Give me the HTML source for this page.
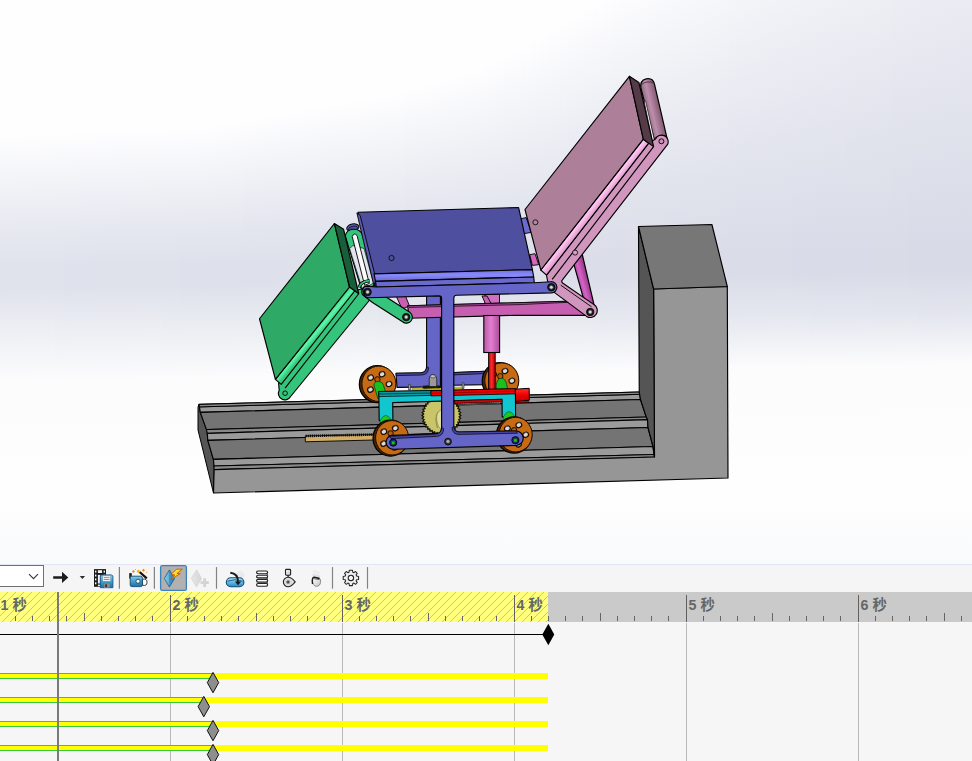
<!DOCTYPE html>
<html lang="zh-CN"><head><meta charset="utf-8"><title>运动算例</title>
<style>
html,body{margin:0;padding:0;}
body{width:972px;height:761px;overflow:hidden;background:#f6f6f6;font-family:"Liberation Sans","Noto Sans CJK SC",sans-serif;position:relative;}
#view{position:absolute;left:0;top:0;width:972px;height:564px;overflow:hidden;background:#fdfdfe;}
#view svg{position:absolute;left:0;top:0;}
#sep{position:absolute;left:0;top:564px;width:972px;height:1px;background:#e4e4f4;}
#bar{position:absolute;left:0;top:565px;width:972px;height:27px;background:#f5f5f5;}
#ruler{position:absolute;left:0;top:592px;}
#tracks{position:absolute;left:0;top:622px;width:972px;height:139px;background:#f6f6f6;}
#tb{position:absolute;left:0;top:564px;}
</style></head><body>
<div id="view">
<svg width="972" height="564" viewBox="0 0 972 564">
<g id="bg"><defs><linearGradient id="bg0" gradientUnits="userSpaceOnUse" x1="0" y1="-400" x2="0" y2="600"><stop offset="0.0000" stop-color="rgb(255,255,255)"/><stop offset="0.5348" stop-color="rgb(254,254,255)"/><stop offset="0.6346" stop-color="rgb(230,232,240)"/><stop offset="0.6679" stop-color="rgb(224,227,236)"/><stop offset="0.6899" stop-color="rgb(224,227,236)"/><stop offset="0.7269" stop-color="rgb(236,238,243)"/><stop offset="0.7819" stop-color="rgb(252,252,253)"/><stop offset="0.9000" stop-color="rgb(254,254,254)"/><stop offset="0.9630" stop-color="rgb(249,250,252)"/><stop offset="1.0000" stop-color="rgb(249,250,252)"/></linearGradient><linearGradient id="bg1" gradientUnits="userSpaceOnUse" x1="0" y1="-400" x2="0" y2="600"><stop offset="0.0000" stop-color="rgb(255,255,255)"/><stop offset="0.5345" stop-color="rgb(254,254,255)"/><stop offset="0.6344" stop-color="rgb(230,232,240)"/><stop offset="0.6677" stop-color="rgb(224,227,236)"/><stop offset="0.6897" stop-color="rgb(224,227,236)"/><stop offset="0.7268" stop-color="rgb(236,238,243)"/><stop offset="0.7817" stop-color="rgb(252,252,253)"/><stop offset="0.9000" stop-color="rgb(254,254,254)"/><stop offset="0.9630" stop-color="rgb(249,250,252)"/><stop offset="1.0000" stop-color="rgb(249,250,252)"/></linearGradient><linearGradient id="bg2" gradientUnits="userSpaceOnUse" x1="0" y1="-400" x2="0" y2="600"><stop offset="0.0000" stop-color="rgb(255,255,255)"/><stop offset="0.5342" stop-color="rgb(254,254,255)"/><stop offset="0.6342" stop-color="rgb(230,232,240)"/><stop offset="0.6676" stop-color="rgb(224,227,236)"/><stop offset="0.6895" stop-color="rgb(224,227,236)"/><stop offset="0.7267" stop-color="rgb(236,238,243)"/><stop offset="0.7816" stop-color="rgb(252,252,253)"/><stop offset="0.9000" stop-color="rgb(254,254,254)"/><stop offset="0.9630" stop-color="rgb(249,250,252)"/><stop offset="1.0000" stop-color="rgb(249,250,252)"/></linearGradient><linearGradient id="bg3" gradientUnits="userSpaceOnUse" x1="0" y1="-400" x2="0" y2="600"><stop offset="0.0000" stop-color="rgb(255,255,255)"/><stop offset="0.5339" stop-color="rgb(254,254,255)"/><stop offset="0.6340" stop-color="rgb(230,232,240)"/><stop offset="0.6674" stop-color="rgb(224,227,236)"/><stop offset="0.6894" stop-color="rgb(224,227,236)"/><stop offset="0.7265" stop-color="rgb(236,238,243)"/><stop offset="0.7814" stop-color="rgb(252,252,253)"/><stop offset="0.9000" stop-color="rgb(254,254,254)"/><stop offset="0.9630" stop-color="rgb(249,250,252)"/><stop offset="1.0000" stop-color="rgb(249,250,252)"/></linearGradient><linearGradient id="bg4" gradientUnits="userSpaceOnUse" x1="0" y1="-400" x2="0" y2="600"><stop offset="0.0000" stop-color="rgb(255,255,255)"/><stop offset="0.5336" stop-color="rgb(254,254,255)"/><stop offset="0.6338" stop-color="rgb(230,232,240)"/><stop offset="0.6673" stop-color="rgb(224,227,236)"/><stop offset="0.6892" stop-color="rgb(224,227,236)"/><stop offset="0.7264" stop-color="rgb(236,238,243)"/><stop offset="0.7812" stop-color="rgb(252,252,253)"/><stop offset="0.9000" stop-color="rgb(254,254,254)"/><stop offset="0.9630" stop-color="rgb(249,250,252)"/><stop offset="1.0000" stop-color="rgb(249,250,252)"/></linearGradient><linearGradient id="bg5" gradientUnits="userSpaceOnUse" x1="0" y1="-400" x2="0" y2="600"><stop offset="0.0000" stop-color="rgb(255,255,255)"/><stop offset="0.5333" stop-color="rgb(254,254,255)"/><stop offset="0.6336" stop-color="rgb(230,232,240)"/><stop offset="0.6671" stop-color="rgb(224,227,236)"/><stop offset="0.6890" stop-color="rgb(224,227,236)"/><stop offset="0.7262" stop-color="rgb(236,238,243)"/><stop offset="0.7811" stop-color="rgb(252,252,253)"/><stop offset="0.9000" stop-color="rgb(254,254,254)"/><stop offset="0.9630" stop-color="rgb(249,250,252)"/><stop offset="1.0000" stop-color="rgb(249,250,252)"/></linearGradient><linearGradient id="bg6" gradientUnits="userSpaceOnUse" x1="0" y1="-400" x2="0" y2="600"><stop offset="0.0000" stop-color="rgb(255,255,255)"/><stop offset="0.5330" stop-color="rgb(254,254,255)"/><stop offset="0.6334" stop-color="rgb(230,232,240)"/><stop offset="0.6669" stop-color="rgb(224,227,236)"/><stop offset="0.6888" stop-color="rgb(224,227,236)"/><stop offset="0.7261" stop-color="rgb(235,237,243)"/><stop offset="0.7809" stop-color="rgb(252,252,253)"/><stop offset="0.9000" stop-color="rgb(254,254,254)"/><stop offset="0.9630" stop-color="rgb(249,250,252)"/><stop offset="1.0000" stop-color="rgb(249,250,252)"/></linearGradient><linearGradient id="bg7" gradientUnits="userSpaceOnUse" x1="0" y1="-400" x2="0" y2="600"><stop offset="0.0000" stop-color="rgb(255,255,255)"/><stop offset="0.5326" stop-color="rgb(254,254,255)"/><stop offset="0.6332" stop-color="rgb(230,232,240)"/><stop offset="0.6667" stop-color="rgb(223,226,236)"/><stop offset="0.6886" stop-color="rgb(223,226,236)"/><stop offset="0.7260" stop-color="rgb(235,237,243)"/><stop offset="0.7808" stop-color="rgb(252,252,253)"/><stop offset="0.9000" stop-color="rgb(254,254,254)"/><stop offset="0.9630" stop-color="rgb(249,250,252)"/><stop offset="1.0000" stop-color="rgb(249,250,252)"/></linearGradient><linearGradient id="bg8" gradientUnits="userSpaceOnUse" x1="0" y1="-400" x2="0" y2="600"><stop offset="0.0000" stop-color="rgb(255,255,255)"/><stop offset="0.5323" stop-color="rgb(254,254,255)"/><stop offset="0.6330" stop-color="rgb(230,232,240)"/><stop offset="0.6666" stop-color="rgb(223,226,236)"/><stop offset="0.6884" stop-color="rgb(223,226,236)"/><stop offset="0.7258" stop-color="rgb(235,237,243)"/><stop offset="0.7806" stop-color="rgb(252,252,253)"/><stop offset="0.9000" stop-color="rgb(254,254,254)"/><stop offset="0.9630" stop-color="rgb(249,250,252)"/><stop offset="1.0000" stop-color="rgb(249,250,252)"/></linearGradient><linearGradient id="bg9" gradientUnits="userSpaceOnUse" x1="0" y1="-400" x2="0" y2="600"><stop offset="0.0000" stop-color="rgb(255,255,255)"/><stop offset="0.5320" stop-color="rgb(254,254,255)"/><stop offset="0.6328" stop-color="rgb(229,231,240)"/><stop offset="0.6664" stop-color="rgb(223,226,236)"/><stop offset="0.6882" stop-color="rgb(223,226,236)"/><stop offset="0.7257" stop-color="rgb(235,237,243)"/><stop offset="0.7804" stop-color="rgb(252,252,253)"/><stop offset="0.9000" stop-color="rgb(254,254,254)"/><stop offset="0.9630" stop-color="rgb(249,250,252)"/><stop offset="1.0000" stop-color="rgb(249,250,252)"/></linearGradient><linearGradient id="bg10" gradientUnits="userSpaceOnUse" x1="0" y1="-400" x2="0" y2="600"><stop offset="0.0000" stop-color="rgb(255,255,255)"/><stop offset="0.5317" stop-color="rgb(254,254,255)"/><stop offset="0.6326" stop-color="rgb(229,231,240)"/><stop offset="0.6663" stop-color="rgb(223,226,236)"/><stop offset="0.6881" stop-color="rgb(223,226,236)"/><stop offset="0.7255" stop-color="rgb(235,237,243)"/><stop offset="0.7802" stop-color="rgb(252,252,253)"/><stop offset="0.9000" stop-color="rgb(254,254,254)"/><stop offset="0.9630" stop-color="rgb(249,250,252)"/><stop offset="1.0000" stop-color="rgb(249,250,252)"/></linearGradient><linearGradient id="bg11" gradientUnits="userSpaceOnUse" x1="0" y1="-400" x2="0" y2="600"><stop offset="0.0000" stop-color="rgb(255,255,255)"/><stop offset="0.5314" stop-color="rgb(254,254,255)"/><stop offset="0.6324" stop-color="rgb(229,231,240)"/><stop offset="0.6661" stop-color="rgb(223,226,235)"/><stop offset="0.6879" stop-color="rgb(223,226,235)"/><stop offset="0.7254" stop-color="rgb(235,237,242)"/><stop offset="0.7801" stop-color="rgb(252,252,253)"/><stop offset="0.9000" stop-color="rgb(254,254,254)"/><stop offset="0.9630" stop-color="rgb(249,250,252)"/><stop offset="1.0000" stop-color="rgb(249,250,252)"/></linearGradient><linearGradient id="bg12" gradientUnits="userSpaceOnUse" x1="0" y1="-400" x2="0" y2="600"><stop offset="0.0000" stop-color="rgb(255,255,255)"/><stop offset="0.5311" stop-color="rgb(254,254,255)"/><stop offset="0.6322" stop-color="rgb(229,231,240)"/><stop offset="0.6659" stop-color="rgb(223,226,235)"/><stop offset="0.6877" stop-color="rgb(223,226,235)"/><stop offset="0.7253" stop-color="rgb(235,237,242)"/><stop offset="0.7799" stop-color="rgb(252,252,253)"/><stop offset="0.9000" stop-color="rgb(254,254,254)"/><stop offset="0.9630" stop-color="rgb(249,250,252)"/><stop offset="1.0000" stop-color="rgb(249,250,252)"/></linearGradient><linearGradient id="bg13" gradientUnits="userSpaceOnUse" x1="0" y1="-400" x2="0" y2="600"><stop offset="0.0000" stop-color="rgb(255,255,255)"/><stop offset="0.5307" stop-color="rgb(254,254,255)"/><stop offset="0.6320" stop-color="rgb(229,231,240)"/><stop offset="0.6657" stop-color="rgb(223,226,235)"/><stop offset="0.6875" stop-color="rgb(223,226,235)"/><stop offset="0.7251" stop-color="rgb(235,237,242)"/><stop offset="0.7798" stop-color="rgb(252,252,253)"/><stop offset="0.9000" stop-color="rgb(254,254,254)"/><stop offset="0.9630" stop-color="rgb(249,250,252)"/><stop offset="1.0000" stop-color="rgb(249,250,252)"/></linearGradient><linearGradient id="bg14" gradientUnits="userSpaceOnUse" x1="0" y1="-400" x2="0" y2="600"><stop offset="0.0000" stop-color="rgb(255,255,255)"/><stop offset="0.5304" stop-color="rgb(254,254,255)"/><stop offset="0.6318" stop-color="rgb(229,231,239)"/><stop offset="0.6656" stop-color="rgb(223,226,235)"/><stop offset="0.6873" stop-color="rgb(223,226,235)"/><stop offset="0.7250" stop-color="rgb(235,237,242)"/><stop offset="0.7796" stop-color="rgb(252,252,253)"/><stop offset="0.9000" stop-color="rgb(254,254,254)"/><stop offset="0.9630" stop-color="rgb(249,250,252)"/><stop offset="1.0000" stop-color="rgb(249,250,252)"/></linearGradient><linearGradient id="bg15" gradientUnits="userSpaceOnUse" x1="0" y1="-400" x2="0" y2="600"><stop offset="0.0000" stop-color="rgb(255,255,255)"/><stop offset="0.5301" stop-color="rgb(254,254,255)"/><stop offset="0.6316" stop-color="rgb(229,231,239)"/><stop offset="0.6654" stop-color="rgb(223,226,235)"/><stop offset="0.6871" stop-color="rgb(223,226,235)"/><stop offset="0.7248" stop-color="rgb(235,237,242)"/><stop offset="0.7794" stop-color="rgb(252,252,253)"/><stop offset="0.9000" stop-color="rgb(254,254,254)"/><stop offset="0.9630" stop-color="rgb(249,250,252)"/><stop offset="1.0000" stop-color="rgb(249,250,252)"/></linearGradient><linearGradient id="bg16" gradientUnits="userSpaceOnUse" x1="0" y1="-400" x2="0" y2="600"><stop offset="0.0000" stop-color="rgb(255,255,255)"/><stop offset="0.5298" stop-color="rgb(254,254,255)"/><stop offset="0.6314" stop-color="rgb(229,231,239)"/><stop offset="0.6653" stop-color="rgb(223,226,235)"/><stop offset="0.6869" stop-color="rgb(223,226,235)"/><stop offset="0.7247" stop-color="rgb(235,237,242)"/><stop offset="0.7792" stop-color="rgb(252,252,253)"/><stop offset="0.9000" stop-color="rgb(254,254,254)"/><stop offset="0.9630" stop-color="rgb(249,250,252)"/><stop offset="1.0000" stop-color="rgb(249,250,252)"/></linearGradient><linearGradient id="bg17" gradientUnits="userSpaceOnUse" x1="0" y1="-400" x2="0" y2="600"><stop offset="0.0000" stop-color="rgb(255,255,255)"/><stop offset="0.5295" stop-color="rgb(254,254,255)"/><stop offset="0.6312" stop-color="rgb(229,231,239)"/><stop offset="0.6651" stop-color="rgb(223,226,235)"/><stop offset="0.6868" stop-color="rgb(223,226,235)"/><stop offset="0.7246" stop-color="rgb(235,237,242)"/><stop offset="0.7791" stop-color="rgb(252,252,253)"/><stop offset="0.9000" stop-color="rgb(254,254,254)"/><stop offset="0.9630" stop-color="rgb(249,250,252)"/><stop offset="1.0000" stop-color="rgb(249,250,252)"/></linearGradient><linearGradient id="bg18" gradientUnits="userSpaceOnUse" x1="0" y1="-400" x2="0" y2="600"><stop offset="0.0000" stop-color="rgb(255,255,255)"/><stop offset="0.5292" stop-color="rgb(254,254,255)"/><stop offset="0.6310" stop-color="rgb(229,231,239)"/><stop offset="0.6649" stop-color="rgb(223,226,235)"/><stop offset="0.6866" stop-color="rgb(223,226,235)"/><stop offset="0.7244" stop-color="rgb(234,236,242)"/><stop offset="0.7789" stop-color="rgb(252,252,253)"/><stop offset="0.9000" stop-color="rgb(254,254,254)"/><stop offset="0.9630" stop-color="rgb(249,250,252)"/><stop offset="1.0000" stop-color="rgb(249,250,252)"/></linearGradient><linearGradient id="bg19" gradientUnits="userSpaceOnUse" x1="0" y1="-400" x2="0" y2="600"><stop offset="0.0000" stop-color="rgb(255,255,255)"/><stop offset="0.5289" stop-color="rgb(254,254,255)"/><stop offset="0.6308" stop-color="rgb(229,231,239)"/><stop offset="0.6647" stop-color="rgb(223,226,235)"/><stop offset="0.6864" stop-color="rgb(223,226,235)"/><stop offset="0.7243" stop-color="rgb(234,236,242)"/><stop offset="0.7788" stop-color="rgb(252,252,253)"/><stop offset="0.9000" stop-color="rgb(254,254,254)"/><stop offset="0.9630" stop-color="rgb(249,250,252)"/><stop offset="1.0000" stop-color="rgb(249,250,252)"/></linearGradient><linearGradient id="bg20" gradientUnits="userSpaceOnUse" x1="0" y1="-400" x2="0" y2="600"><stop offset="0.0000" stop-color="rgb(255,255,255)"/><stop offset="0.5285" stop-color="rgb(254,254,255)"/><stop offset="0.6306" stop-color="rgb(229,231,239)"/><stop offset="0.6646" stop-color="rgb(222,225,235)"/><stop offset="0.6862" stop-color="rgb(222,225,235)"/><stop offset="0.7242" stop-color="rgb(234,236,242)"/><stop offset="0.7786" stop-color="rgb(252,252,253)"/><stop offset="0.9000" stop-color="rgb(254,254,254)"/><stop offset="0.9630" stop-color="rgb(249,250,252)"/><stop offset="1.0000" stop-color="rgb(249,250,252)"/></linearGradient><linearGradient id="bg21" gradientUnits="userSpaceOnUse" x1="0" y1="-400" x2="0" y2="600"><stop offset="0.0000" stop-color="rgb(255,255,255)"/><stop offset="0.5282" stop-color="rgb(254,254,255)"/><stop offset="0.6304" stop-color="rgb(229,231,239)"/><stop offset="0.6644" stop-color="rgb(222,225,235)"/><stop offset="0.6860" stop-color="rgb(222,225,235)"/><stop offset="0.7240" stop-color="rgb(234,236,242)"/><stop offset="0.7784" stop-color="rgb(252,252,253)"/><stop offset="0.9000" stop-color="rgb(254,254,254)"/><stop offset="0.9630" stop-color="rgb(249,250,252)"/><stop offset="1.0000" stop-color="rgb(249,250,252)"/></linearGradient><linearGradient id="bg22" gradientUnits="userSpaceOnUse" x1="0" y1="-400" x2="0" y2="600"><stop offset="0.0000" stop-color="rgb(255,255,255)"/><stop offset="0.5275" stop-color="rgb(254,254,255)"/><stop offset="0.6301" stop-color="rgb(229,231,239)"/><stop offset="0.6643" stop-color="rgb(222,225,235)"/><stop offset="0.6858" stop-color="rgb(222,225,235)"/><stop offset="0.7239" stop-color="rgb(234,236,242)"/><stop offset="0.7782" stop-color="rgb(252,252,253)"/><stop offset="0.9000" stop-color="rgb(254,254,254)"/><stop offset="0.9630" stop-color="rgb(249,250,252)"/><stop offset="1.0000" stop-color="rgb(249,250,252)"/></linearGradient><linearGradient id="bg23" gradientUnits="userSpaceOnUse" x1="0" y1="-400" x2="0" y2="600"><stop offset="0.0000" stop-color="rgb(255,255,255)"/><stop offset="0.5259" stop-color="rgb(254,254,255)"/><stop offset="0.6295" stop-color="rgb(229,231,239)"/><stop offset="0.6641" stop-color="rgb(222,225,235)"/><stop offset="0.6856" stop-color="rgb(222,225,235)"/><stop offset="0.7237" stop-color="rgb(234,236,242)"/><stop offset="0.7781" stop-color="rgb(252,252,253)"/><stop offset="0.9000" stop-color="rgb(254,254,254)"/><stop offset="0.9630" stop-color="rgb(249,250,252)"/><stop offset="1.0000" stop-color="rgb(249,250,252)"/></linearGradient><linearGradient id="bg24" gradientUnits="userSpaceOnUse" x1="0" y1="-400" x2="0" y2="600"><stop offset="0.0000" stop-color="rgb(255,255,255)"/><stop offset="0.5243" stop-color="rgb(254,254,255)"/><stop offset="0.6290" stop-color="rgb(229,231,239)"/><stop offset="0.6639" stop-color="rgb(222,225,235)"/><stop offset="0.6855" stop-color="rgb(222,225,235)"/><stop offset="0.7236" stop-color="rgb(234,236,242)"/><stop offset="0.7779" stop-color="rgb(252,252,253)"/><stop offset="0.9000" stop-color="rgb(254,254,254)"/><stop offset="0.9630" stop-color="rgb(249,250,252)"/><stop offset="1.0000" stop-color="rgb(249,250,252)"/></linearGradient><linearGradient id="bg25" gradientUnits="userSpaceOnUse" x1="0" y1="-400" x2="0" y2="600"><stop offset="0.0000" stop-color="rgb(255,255,255)"/><stop offset="0.5227" stop-color="rgb(254,254,255)"/><stop offset="0.6285" stop-color="rgb(229,231,239)"/><stop offset="0.6637" stop-color="rgb(222,225,235)"/><stop offset="0.6853" stop-color="rgb(222,225,235)"/><stop offset="0.7235" stop-color="rgb(234,236,242)"/><stop offset="0.7778" stop-color="rgb(252,252,253)"/><stop offset="0.9000" stop-color="rgb(254,254,254)"/><stop offset="0.9630" stop-color="rgb(249,250,252)"/><stop offset="1.0000" stop-color="rgb(249,250,252)"/></linearGradient><linearGradient id="bg26" gradientUnits="userSpaceOnUse" x1="0" y1="-400" x2="0" y2="600"><stop offset="0.0000" stop-color="rgb(255,255,255)"/><stop offset="0.5211" stop-color="rgb(254,254,255)"/><stop offset="0.6280" stop-color="rgb(229,231,239)"/><stop offset="0.6636" stop-color="rgb(222,225,235)"/><stop offset="0.6851" stop-color="rgb(222,225,235)"/><stop offset="0.7233" stop-color="rgb(234,236,242)"/><stop offset="0.7776" stop-color="rgb(252,252,253)"/><stop offset="0.9000" stop-color="rgb(254,254,254)"/><stop offset="0.9630" stop-color="rgb(249,250,252)"/><stop offset="1.0000" stop-color="rgb(249,250,252)"/></linearGradient><linearGradient id="bg27" gradientUnits="userSpaceOnUse" x1="0" y1="-400" x2="0" y2="600"><stop offset="0.0000" stop-color="rgb(255,255,255)"/><stop offset="0.5195" stop-color="rgb(254,254,255)"/><stop offset="0.6274" stop-color="rgb(228,230,239)"/><stop offset="0.6634" stop-color="rgb(222,225,235)"/><stop offset="0.6849" stop-color="rgb(222,225,235)"/><stop offset="0.7232" stop-color="rgb(234,236,242)"/><stop offset="0.7774" stop-color="rgb(252,252,253)"/><stop offset="0.9000" stop-color="rgb(254,254,254)"/><stop offset="0.9630" stop-color="rgb(249,250,252)"/><stop offset="1.0000" stop-color="rgb(249,250,252)"/></linearGradient><linearGradient id="bg28" gradientUnits="userSpaceOnUse" x1="0" y1="-400" x2="0" y2="600"><stop offset="0.0000" stop-color="rgb(255,255,255)"/><stop offset="0.5178" stop-color="rgb(254,254,255)"/><stop offset="0.6269" stop-color="rgb(228,230,239)"/><stop offset="0.6633" stop-color="rgb(222,225,235)"/><stop offset="0.6847" stop-color="rgb(222,225,235)"/><stop offset="0.7230" stop-color="rgb(234,236,242)"/><stop offset="0.7772" stop-color="rgb(252,252,253)"/><stop offset="0.9000" stop-color="rgb(254,254,254)"/><stop offset="0.9630" stop-color="rgb(249,250,252)"/><stop offset="1.0000" stop-color="rgb(249,250,252)"/></linearGradient><linearGradient id="bg29" gradientUnits="userSpaceOnUse" x1="0" y1="-400" x2="0" y2="600"><stop offset="0.0000" stop-color="rgb(255,255,255)"/><stop offset="0.5162" stop-color="rgb(254,254,255)"/><stop offset="0.6264" stop-color="rgb(228,230,239)"/><stop offset="0.6631" stop-color="rgb(222,225,235)"/><stop offset="0.6845" stop-color="rgb(222,225,235)"/><stop offset="0.7229" stop-color="rgb(234,236,242)"/><stop offset="0.7771" stop-color="rgb(252,252,253)"/><stop offset="0.9000" stop-color="rgb(254,254,254)"/><stop offset="0.9630" stop-color="rgb(249,250,252)"/><stop offset="1.0000" stop-color="rgb(249,250,252)"/></linearGradient><linearGradient id="bg30" gradientUnits="userSpaceOnUse" x1="0" y1="-400" x2="0" y2="600"><stop offset="0.0000" stop-color="rgb(255,255,255)"/><stop offset="0.5146" stop-color="rgb(254,254,255)"/><stop offset="0.6258" stop-color="rgb(228,230,239)"/><stop offset="0.6629" stop-color="rgb(222,225,235)"/><stop offset="0.6844" stop-color="rgb(222,225,235)"/><stop offset="0.7228" stop-color="rgb(233,235,242)"/><stop offset="0.7769" stop-color="rgb(252,252,253)"/><stop offset="0.9000" stop-color="rgb(254,254,254)"/><stop offset="0.9630" stop-color="rgb(249,250,252)"/><stop offset="1.0000" stop-color="rgb(249,250,252)"/></linearGradient><linearGradient id="bg31" gradientUnits="userSpaceOnUse" x1="0" y1="-400" x2="0" y2="600"><stop offset="0.0000" stop-color="rgb(255,255,255)"/><stop offset="0.5130" stop-color="rgb(254,254,255)"/><stop offset="0.6253" stop-color="rgb(228,230,239)"/><stop offset="0.6627" stop-color="rgb(222,225,235)"/><stop offset="0.6842" stop-color="rgb(222,225,235)"/><stop offset="0.7226" stop-color="rgb(233,235,242)"/><stop offset="0.7768" stop-color="rgb(252,252,253)"/><stop offset="0.9000" stop-color="rgb(254,254,254)"/><stop offset="0.9630" stop-color="rgb(249,250,252)"/><stop offset="1.0000" stop-color="rgb(249,250,252)"/></linearGradient><linearGradient id="bg32" gradientUnits="userSpaceOnUse" x1="0" y1="-400" x2="0" y2="600"><stop offset="0.0000" stop-color="rgb(255,255,255)"/><stop offset="0.5113" stop-color="rgb(254,254,255)"/><stop offset="0.6248" stop-color="rgb(228,230,239)"/><stop offset="0.6626" stop-color="rgb(222,225,234)"/><stop offset="0.6840" stop-color="rgb(222,225,234)"/><stop offset="0.7225" stop-color="rgb(233,235,241)"/><stop offset="0.7766" stop-color="rgb(252,252,253)"/><stop offset="0.9000" stop-color="rgb(254,254,254)"/><stop offset="0.9630" stop-color="rgb(249,250,252)"/><stop offset="1.0000" stop-color="rgb(249,250,252)"/></linearGradient><linearGradient id="bg33" gradientUnits="userSpaceOnUse" x1="0" y1="-400" x2="0" y2="600"><stop offset="0.0000" stop-color="rgb(255,255,255)"/><stop offset="0.5097" stop-color="rgb(254,254,255)"/><stop offset="0.6242" stop-color="rgb(228,230,239)"/><stop offset="0.6624" stop-color="rgb(222,225,234)"/><stop offset="0.6838" stop-color="rgb(222,225,234)"/><stop offset="0.7223" stop-color="rgb(233,235,241)"/><stop offset="0.7764" stop-color="rgb(252,252,253)"/><stop offset="0.9000" stop-color="rgb(254,254,254)"/><stop offset="0.9630" stop-color="rgb(249,250,252)"/><stop offset="1.0000" stop-color="rgb(249,250,252)"/></linearGradient><linearGradient id="bg34" gradientUnits="userSpaceOnUse" x1="0" y1="-400" x2="0" y2="600"><stop offset="0.0000" stop-color="rgb(255,255,255)"/><stop offset="0.5081" stop-color="rgb(254,254,255)"/><stop offset="0.6237" stop-color="rgb(228,230,239)"/><stop offset="0.6623" stop-color="rgb(221,224,234)"/><stop offset="0.6836" stop-color="rgb(221,224,234)"/><stop offset="0.7222" stop-color="rgb(233,235,241)"/><stop offset="0.7762" stop-color="rgb(252,252,253)"/><stop offset="0.9000" stop-color="rgb(254,254,254)"/><stop offset="0.9630" stop-color="rgb(249,250,252)"/><stop offset="1.0000" stop-color="rgb(249,250,252)"/></linearGradient><linearGradient id="bg35" gradientUnits="userSpaceOnUse" x1="0" y1="-400" x2="0" y2="600"><stop offset="0.0000" stop-color="rgb(255,255,255)"/><stop offset="0.5065" stop-color="rgb(254,254,255)"/><stop offset="0.6232" stop-color="rgb(228,230,239)"/><stop offset="0.6621" stop-color="rgb(221,224,234)"/><stop offset="0.6834" stop-color="rgb(221,224,234)"/><stop offset="0.7221" stop-color="rgb(233,235,241)"/><stop offset="0.7761" stop-color="rgb(252,252,253)"/><stop offset="0.9000" stop-color="rgb(254,254,254)"/><stop offset="0.9630" stop-color="rgb(249,250,252)"/><stop offset="1.0000" stop-color="rgb(249,250,252)"/></linearGradient><linearGradient id="bg36" gradientUnits="userSpaceOnUse" x1="0" y1="-400" x2="0" y2="600"><stop offset="0.0000" stop-color="rgb(255,255,255)"/><stop offset="0.5049" stop-color="rgb(254,254,255)"/><stop offset="0.6227" stop-color="rgb(228,230,239)"/><stop offset="0.6619" stop-color="rgb(221,224,234)"/><stop offset="0.6832" stop-color="rgb(221,224,234)"/><stop offset="0.7219" stop-color="rgb(233,235,241)"/><stop offset="0.7759" stop-color="rgb(252,252,253)"/><stop offset="0.9000" stop-color="rgb(254,254,254)"/><stop offset="0.9630" stop-color="rgb(249,250,252)"/><stop offset="1.0000" stop-color="rgb(249,250,252)"/></linearGradient><linearGradient id="bg37" gradientUnits="userSpaceOnUse" x1="0" y1="-400" x2="0" y2="600"><stop offset="0.0000" stop-color="rgb(255,255,255)"/><stop offset="0.5032" stop-color="rgb(254,254,255)"/><stop offset="0.6221" stop-color="rgb(228,230,239)"/><stop offset="0.6617" stop-color="rgb(221,224,234)"/><stop offset="0.6831" stop-color="rgb(221,224,234)"/><stop offset="0.7218" stop-color="rgb(233,235,241)"/><stop offset="0.7758" stop-color="rgb(252,252,253)"/><stop offset="0.9000" stop-color="rgb(254,254,254)"/><stop offset="0.9630" stop-color="rgb(249,250,252)"/><stop offset="1.0000" stop-color="rgb(249,250,252)"/></linearGradient><linearGradient id="bg38" gradientUnits="userSpaceOnUse" x1="0" y1="-400" x2="0" y2="600"><stop offset="0.0000" stop-color="rgb(255,255,255)"/><stop offset="0.5016" stop-color="rgb(254,254,255)"/><stop offset="0.6216" stop-color="rgb(228,230,239)"/><stop offset="0.6616" stop-color="rgb(221,224,234)"/><stop offset="0.6829" stop-color="rgb(221,224,234)"/><stop offset="0.7217" stop-color="rgb(233,235,241)"/><stop offset="0.7756" stop-color="rgb(252,252,253)"/><stop offset="0.9000" stop-color="rgb(254,254,254)"/><stop offset="0.9630" stop-color="rgb(249,250,252)"/><stop offset="1.0000" stop-color="rgb(249,250,252)"/></linearGradient><linearGradient id="bg39" gradientUnits="userSpaceOnUse" x1="0" y1="-400" x2="0" y2="600"><stop offset="0.0000" stop-color="rgb(255,255,255)"/><stop offset="0.5000" stop-color="rgb(254,254,255)"/><stop offset="0.6211" stop-color="rgb(228,230,239)"/><stop offset="0.6614" stop-color="rgb(221,224,234)"/><stop offset="0.6827" stop-color="rgb(221,224,234)"/><stop offset="0.7215" stop-color="rgb(233,235,241)"/><stop offset="0.7754" stop-color="rgb(252,252,253)"/><stop offset="0.9000" stop-color="rgb(254,254,254)"/><stop offset="0.9630" stop-color="rgb(249,250,252)"/><stop offset="1.0000" stop-color="rgb(249,250,252)"/></linearGradient><linearGradient id="bg40" gradientUnits="userSpaceOnUse" x1="0" y1="-400" x2="0" y2="600"><stop offset="0.0000" stop-color="rgb(255,255,255)"/><stop offset="0.4984" stop-color="rgb(254,254,255)"/><stop offset="0.6205" stop-color="rgb(228,230,238)"/><stop offset="0.6613" stop-color="rgb(221,224,234)"/><stop offset="0.6825" stop-color="rgb(221,224,234)"/><stop offset="0.7214" stop-color="rgb(233,235,241)"/><stop offset="0.7752" stop-color="rgb(252,252,253)"/><stop offset="0.9000" stop-color="rgb(254,254,254)"/><stop offset="0.9630" stop-color="rgb(249,250,252)"/><stop offset="1.0000" stop-color="rgb(249,250,252)"/></linearGradient><linearGradient id="bg41" gradientUnits="userSpaceOnUse" x1="0" y1="-400" x2="0" y2="600"><stop offset="0.0000" stop-color="rgb(255,255,255)"/><stop offset="0.4968" stop-color="rgb(254,254,255)"/><stop offset="0.6200" stop-color="rgb(228,230,238)"/><stop offset="0.6611" stop-color="rgb(221,224,234)"/><stop offset="0.6823" stop-color="rgb(221,224,234)"/><stop offset="0.7212" stop-color="rgb(233,235,241)"/><stop offset="0.7751" stop-color="rgb(252,252,253)"/><stop offset="0.9000" stop-color="rgb(254,254,254)"/><stop offset="0.9630" stop-color="rgb(249,250,252)"/><stop offset="1.0000" stop-color="rgb(249,250,252)"/></linearGradient><linearGradient id="bg42" gradientUnits="userSpaceOnUse" x1="0" y1="-400" x2="0" y2="600"><stop offset="0.0000" stop-color="rgb(255,255,255)"/><stop offset="0.4951" stop-color="rgb(254,254,255)"/><stop offset="0.6195" stop-color="rgb(228,230,238)"/><stop offset="0.6609" stop-color="rgb(221,224,234)"/><stop offset="0.6821" stop-color="rgb(221,224,234)"/><stop offset="0.7211" stop-color="rgb(232,234,241)"/><stop offset="0.7749" stop-color="rgb(252,252,253)"/><stop offset="0.9000" stop-color="rgb(254,254,254)"/><stop offset="0.9630" stop-color="rgb(249,250,252)"/><stop offset="1.0000" stop-color="rgb(249,250,252)"/></linearGradient><linearGradient id="bg43" gradientUnits="userSpaceOnUse" x1="0" y1="-400" x2="0" y2="600"><stop offset="0.0000" stop-color="rgb(255,255,255)"/><stop offset="0.4935" stop-color="rgb(254,254,255)"/><stop offset="0.6189" stop-color="rgb(228,230,238)"/><stop offset="0.6607" stop-color="rgb(221,224,234)"/><stop offset="0.6819" stop-color="rgb(221,224,234)"/><stop offset="0.7210" stop-color="rgb(232,234,241)"/><stop offset="0.7748" stop-color="rgb(252,252,253)"/><stop offset="0.9000" stop-color="rgb(254,254,254)"/><stop offset="0.9630" stop-color="rgb(249,250,252)"/><stop offset="1.0000" stop-color="rgb(249,250,252)"/></linearGradient><linearGradient id="bg44" gradientUnits="userSpaceOnUse" x1="0" y1="-400" x2="0" y2="600"><stop offset="0.0000" stop-color="rgb(255,255,255)"/><stop offset="0.4919" stop-color="rgb(254,254,255)"/><stop offset="0.6184" stop-color="rgb(228,230,238)"/><stop offset="0.6606" stop-color="rgb(221,224,234)"/><stop offset="0.6818" stop-color="rgb(221,224,234)"/><stop offset="0.7208" stop-color="rgb(232,234,241)"/><stop offset="0.7746" stop-color="rgb(252,252,253)"/><stop offset="0.9000" stop-color="rgb(254,254,254)"/><stop offset="0.9630" stop-color="rgb(249,250,252)"/><stop offset="1.0000" stop-color="rgb(249,250,252)"/></linearGradient><linearGradient id="bg45" gradientUnits="userSpaceOnUse" x1="0" y1="-400" x2="0" y2="600"><stop offset="0.0000" stop-color="rgb(255,255,255)"/><stop offset="0.4891" stop-color="rgb(254,254,255)"/><stop offset="0.6176" stop-color="rgb(227,229,238)"/><stop offset="0.6604" stop-color="rgb(221,224,234)"/><stop offset="0.6816" stop-color="rgb(221,224,234)"/><stop offset="0.7207" stop-color="rgb(232,234,241)"/><stop offset="0.7744" stop-color="rgb(252,252,253)"/><stop offset="0.9000" stop-color="rgb(254,254,254)"/><stop offset="0.9630" stop-color="rgb(249,250,252)"/><stop offset="1.0000" stop-color="rgb(249,250,252)"/></linearGradient><linearGradient id="bg46" gradientUnits="userSpaceOnUse" x1="0" y1="-400" x2="0" y2="600"><stop offset="0.0000" stop-color="rgb(255,255,255)"/><stop offset="0.4864" stop-color="rgb(254,254,255)"/><stop offset="0.6168" stop-color="rgb(227,229,238)"/><stop offset="0.6603" stop-color="rgb(221,224,234)"/><stop offset="0.6814" stop-color="rgb(221,224,234)"/><stop offset="0.7205" stop-color="rgb(232,234,241)"/><stop offset="0.7742" stop-color="rgb(252,252,253)"/><stop offset="0.9000" stop-color="rgb(254,254,254)"/><stop offset="0.9630" stop-color="rgb(249,250,252)"/><stop offset="1.0000" stop-color="rgb(249,250,252)"/></linearGradient><linearGradient id="bg47" gradientUnits="userSpaceOnUse" x1="0" y1="-400" x2="0" y2="600"><stop offset="0.0000" stop-color="rgb(255,255,255)"/><stop offset="0.4838" stop-color="rgb(254,254,255)"/><stop offset="0.6160" stop-color="rgb(227,229,238)"/><stop offset="0.6601" stop-color="rgb(220,223,234)"/><stop offset="0.6812" stop-color="rgb(220,223,234)"/><stop offset="0.7204" stop-color="rgb(232,234,241)"/><stop offset="0.7741" stop-color="rgb(252,252,253)"/><stop offset="0.9000" stop-color="rgb(254,254,254)"/><stop offset="0.9630" stop-color="rgb(249,250,252)"/><stop offset="1.0000" stop-color="rgb(249,250,252)"/></linearGradient><linearGradient id="bg48" gradientUnits="userSpaceOnUse" x1="0" y1="-400" x2="0" y2="600"><stop offset="0.0000" stop-color="rgb(255,255,255)"/><stop offset="0.4811" stop-color="rgb(254,254,255)"/><stop offset="0.6152" stop-color="rgb(227,229,238)"/><stop offset="0.6599" stop-color="rgb(220,223,234)"/><stop offset="0.6810" stop-color="rgb(220,223,234)"/><stop offset="0.7203" stop-color="rgb(232,234,241)"/><stop offset="0.7739" stop-color="rgb(252,252,253)"/><stop offset="0.9000" stop-color="rgb(254,254,254)"/><stop offset="0.9630" stop-color="rgb(249,250,252)"/><stop offset="1.0000" stop-color="rgb(249,250,252)"/></linearGradient><linearGradient id="bg49" gradientUnits="userSpaceOnUse" x1="0" y1="-400" x2="0" y2="600"><stop offset="0.0000" stop-color="rgb(255,255,255)"/><stop offset="0.4783" stop-color="rgb(254,254,255)"/><stop offset="0.6144" stop-color="rgb(227,229,238)"/><stop offset="0.6597" stop-color="rgb(220,223,234)"/><stop offset="0.6808" stop-color="rgb(220,223,234)"/><stop offset="0.7201" stop-color="rgb(232,234,241)"/><stop offset="0.7738" stop-color="rgb(252,252,253)"/><stop offset="0.9000" stop-color="rgb(254,254,254)"/><stop offset="0.9630" stop-color="rgb(249,250,252)"/><stop offset="1.0000" stop-color="rgb(249,250,252)"/></linearGradient><linearGradient id="bg50" gradientUnits="userSpaceOnUse" x1="0" y1="-400" x2="0" y2="600"><stop offset="0.0000" stop-color="rgb(255,255,255)"/><stop offset="0.4756" stop-color="rgb(254,254,255)"/><stop offset="0.6136" stop-color="rgb(227,229,238)"/><stop offset="0.6596" stop-color="rgb(220,223,234)"/><stop offset="0.6806" stop-color="rgb(220,223,234)"/><stop offset="0.7200" stop-color="rgb(232,234,241)"/><stop offset="0.7736" stop-color="rgb(252,252,253)"/><stop offset="0.9000" stop-color="rgb(254,254,254)"/><stop offset="0.9630" stop-color="rgb(249,250,252)"/><stop offset="1.0000" stop-color="rgb(249,250,252)"/></linearGradient><linearGradient id="bg51" gradientUnits="userSpaceOnUse" x1="0" y1="-400" x2="0" y2="600"><stop offset="0.0000" stop-color="rgb(255,255,255)"/><stop offset="0.4729" stop-color="rgb(254,254,255)"/><stop offset="0.6128" stop-color="rgb(227,229,238)"/><stop offset="0.6594" stop-color="rgb(220,223,234)"/><stop offset="0.6805" stop-color="rgb(220,223,234)"/><stop offset="0.7198" stop-color="rgb(232,234,241)"/><stop offset="0.7734" stop-color="rgb(252,252,253)"/><stop offset="0.9000" stop-color="rgb(254,254,254)"/><stop offset="0.9630" stop-color="rgb(249,250,252)"/><stop offset="1.0000" stop-color="rgb(249,250,252)"/></linearGradient><linearGradient id="bg52" gradientUnits="userSpaceOnUse" x1="0" y1="-400" x2="0" y2="600"><stop offset="0.0000" stop-color="rgb(255,255,255)"/><stop offset="0.4703" stop-color="rgb(254,254,255)"/><stop offset="0.6120" stop-color="rgb(227,229,238)"/><stop offset="0.6593" stop-color="rgb(220,223,234)"/><stop offset="0.6803" stop-color="rgb(220,223,234)"/><stop offset="0.7197" stop-color="rgb(232,234,241)"/><stop offset="0.7732" stop-color="rgb(252,252,253)"/><stop offset="0.9000" stop-color="rgb(254,254,254)"/><stop offset="0.9630" stop-color="rgb(249,250,252)"/><stop offset="1.0000" stop-color="rgb(249,250,252)"/></linearGradient><linearGradient id="bg53" gradientUnits="userSpaceOnUse" x1="0" y1="-400" x2="0" y2="600"><stop offset="0.0000" stop-color="rgb(255,255,255)"/><stop offset="0.4672" stop-color="rgb(254,254,255)"/><stop offset="0.6111" stop-color="rgb(227,229,238)"/><stop offset="0.6591" stop-color="rgb(220,223,234)"/><stop offset="0.6801" stop-color="rgb(220,223,234)"/><stop offset="0.7196" stop-color="rgb(232,234,241)"/><stop offset="0.7731" stop-color="rgb(252,252,253)"/><stop offset="0.9000" stop-color="rgb(254,254,254)"/><stop offset="0.9630" stop-color="rgb(249,250,252)"/><stop offset="1.0000" stop-color="rgb(249,250,252)"/></linearGradient><linearGradient id="bg54" gradientUnits="userSpaceOnUse" x1="0" y1="-400" x2="0" y2="600"><stop offset="0.0000" stop-color="rgb(255,255,255)"/><stop offset="0.4623" stop-color="rgb(254,254,255)"/><stop offset="0.6098" stop-color="rgb(227,229,238)"/><stop offset="0.6589" stop-color="rgb(220,223,233)"/><stop offset="0.6799" stop-color="rgb(220,223,233)"/><stop offset="0.7194" stop-color="rgb(231,233,240)"/><stop offset="0.7729" stop-color="rgb(252,252,253)"/><stop offset="0.9000" stop-color="rgb(254,254,254)"/><stop offset="0.9630" stop-color="rgb(249,250,252)"/><stop offset="1.0000" stop-color="rgb(249,250,252)"/></linearGradient><linearGradient id="bg55" gradientUnits="userSpaceOnUse" x1="0" y1="-400" x2="0" y2="600"><stop offset="0.0000" stop-color="rgb(255,255,255)"/><stop offset="0.4574" stop-color="rgb(254,254,255)"/><stop offset="0.6084" stop-color="rgb(227,229,238)"/><stop offset="0.6587" stop-color="rgb(220,223,233)"/><stop offset="0.6797" stop-color="rgb(220,223,233)"/><stop offset="0.7193" stop-color="rgb(231,233,240)"/><stop offset="0.7728" stop-color="rgb(252,252,253)"/><stop offset="0.9000" stop-color="rgb(254,254,254)"/><stop offset="0.9630" stop-color="rgb(249,250,252)"/><stop offset="1.0000" stop-color="rgb(249,250,252)"/></linearGradient><linearGradient id="bg56" gradientUnits="userSpaceOnUse" x1="0" y1="-400" x2="0" y2="600"><stop offset="0.0000" stop-color="rgb(255,255,255)"/><stop offset="0.4525" stop-color="rgb(254,254,255)"/><stop offset="0.6071" stop-color="rgb(227,229,238)"/><stop offset="0.6586" stop-color="rgb(220,223,233)"/><stop offset="0.6795" stop-color="rgb(220,223,233)"/><stop offset="0.7192" stop-color="rgb(231,233,240)"/><stop offset="0.7726" stop-color="rgb(252,252,253)"/><stop offset="0.9000" stop-color="rgb(254,254,254)"/><stop offset="0.9630" stop-color="rgb(249,250,252)"/><stop offset="1.0000" stop-color="rgb(249,250,252)"/></linearGradient><linearGradient id="bg57" gradientUnits="userSpaceOnUse" x1="0" y1="-400" x2="0" y2="600"><stop offset="0.0000" stop-color="rgb(255,255,255)"/><stop offset="0.4476" stop-color="rgb(254,254,255)"/><stop offset="0.6057" stop-color="rgb(227,229,238)"/><stop offset="0.6584" stop-color="rgb(220,223,233)"/><stop offset="0.6794" stop-color="rgb(220,223,233)"/><stop offset="0.7190" stop-color="rgb(231,233,240)"/><stop offset="0.7724" stop-color="rgb(252,252,253)"/><stop offset="0.9000" stop-color="rgb(254,254,254)"/><stop offset="0.9630" stop-color="rgb(249,250,252)"/><stop offset="1.0000" stop-color="rgb(249,250,252)"/></linearGradient><linearGradient id="bg58" gradientUnits="userSpaceOnUse" x1="0" y1="-400" x2="0" y2="600"><stop offset="0.0000" stop-color="rgb(255,255,255)"/><stop offset="0.4428" stop-color="rgb(254,254,255)"/><stop offset="0.6044" stop-color="rgb(227,229,238)"/><stop offset="0.6583" stop-color="rgb(220,223,233)"/><stop offset="0.6792" stop-color="rgb(220,223,233)"/><stop offset="0.7189" stop-color="rgb(231,233,240)"/><stop offset="0.7722" stop-color="rgb(252,252,253)"/><stop offset="0.9000" stop-color="rgb(254,254,254)"/><stop offset="0.9630" stop-color="rgb(249,250,252)"/><stop offset="1.0000" stop-color="rgb(249,250,252)"/></linearGradient><linearGradient id="bg59" gradientUnits="userSpaceOnUse" x1="0" y1="-400" x2="0" y2="600"><stop offset="0.0000" stop-color="rgb(255,255,255)"/><stop offset="0.4379" stop-color="rgb(254,254,255)"/><stop offset="0.6030" stop-color="rgb(227,229,238)"/><stop offset="0.6581" stop-color="rgb(220,223,233)"/><stop offset="0.6790" stop-color="rgb(220,223,233)"/><stop offset="0.7187" stop-color="rgb(231,233,240)"/><stop offset="0.7721" stop-color="rgb(252,252,253)"/><stop offset="0.9000" stop-color="rgb(254,254,254)"/><stop offset="0.9630" stop-color="rgb(249,250,252)"/><stop offset="1.0000" stop-color="rgb(249,250,252)"/></linearGradient><linearGradient id="bg60" gradientUnits="userSpaceOnUse" x1="0" y1="-400" x2="0" y2="600"><stop offset="0.0000" stop-color="rgb(255,255,255)"/><stop offset="0.4330" stop-color="rgb(254,254,255)"/><stop offset="0.6017" stop-color="rgb(227,229,238)"/><stop offset="0.6579" stop-color="rgb(220,223,233)"/><stop offset="0.6788" stop-color="rgb(220,223,233)"/><stop offset="0.7186" stop-color="rgb(231,233,240)"/><stop offset="0.7719" stop-color="rgb(252,252,253)"/><stop offset="0.9000" stop-color="rgb(254,254,254)"/><stop offset="0.9630" stop-color="rgb(249,250,252)"/><stop offset="1.0000" stop-color="rgb(249,250,252)"/></linearGradient><linearGradient id="bg61" gradientUnits="userSpaceOnUse" x1="0" y1="-400" x2="0" y2="600"><stop offset="0.0000" stop-color="rgb(255,255,255)"/><stop offset="0.4279" stop-color="rgb(254,254,255)"/><stop offset="0.6003" stop-color="rgb(227,229,238)"/><stop offset="0.6577" stop-color="rgb(219,222,233)"/><stop offset="0.6786" stop-color="rgb(219,222,233)"/><stop offset="0.7185" stop-color="rgb(231,233,240)"/><stop offset="0.7718" stop-color="rgb(252,252,253)"/><stop offset="0.9000" stop-color="rgb(254,254,254)"/><stop offset="0.9630" stop-color="rgb(249,250,252)"/><stop offset="1.0000" stop-color="rgb(249,250,252)"/></linearGradient><linearGradient id="bg62" gradientUnits="userSpaceOnUse" x1="0" y1="-400" x2="0" y2="600"><stop offset="0.0000" stop-color="rgb(255,255,255)"/><stop offset="0.4225" stop-color="rgb(254,254,255)"/><stop offset="0.5988" stop-color="rgb(227,229,238)"/><stop offset="0.6576" stop-color="rgb(219,222,233)"/><stop offset="0.6784" stop-color="rgb(219,222,233)"/><stop offset="0.7183" stop-color="rgb(231,233,240)"/><stop offset="0.7716" stop-color="rgb(252,252,253)"/><stop offset="0.9000" stop-color="rgb(254,254,254)"/><stop offset="0.9630" stop-color="rgb(249,250,252)"/><stop offset="1.0000" stop-color="rgb(249,250,252)"/></linearGradient><linearGradient id="bg63" gradientUnits="userSpaceOnUse" x1="0" y1="-400" x2="0" y2="600"><stop offset="0.0000" stop-color="rgb(255,255,255)"/><stop offset="0.4171" stop-color="rgb(254,254,255)"/><stop offset="0.5973" stop-color="rgb(226,228,238)"/><stop offset="0.6574" stop-color="rgb(219,222,233)"/><stop offset="0.6782" stop-color="rgb(219,222,233)"/><stop offset="0.7182" stop-color="rgb(231,233,240)"/><stop offset="0.7714" stop-color="rgb(252,252,253)"/><stop offset="0.9000" stop-color="rgb(254,254,254)"/><stop offset="0.9630" stop-color="rgb(249,250,252)"/><stop offset="1.0000" stop-color="rgb(249,250,252)"/></linearGradient><linearGradient id="bg64" gradientUnits="userSpaceOnUse" x1="0" y1="-400" x2="0" y2="600"><stop offset="0.0000" stop-color="rgb(255,255,255)"/><stop offset="0.4117" stop-color="rgb(254,254,255)"/><stop offset="0.5959" stop-color="rgb(226,228,238)"/><stop offset="0.6573" stop-color="rgb(219,222,233)"/><stop offset="0.6781" stop-color="rgb(219,222,233)"/><stop offset="0.7180" stop-color="rgb(231,233,240)"/><stop offset="0.7712" stop-color="rgb(252,252,253)"/><stop offset="0.9000" stop-color="rgb(254,254,254)"/><stop offset="0.9630" stop-color="rgb(249,250,252)"/><stop offset="1.0000" stop-color="rgb(249,250,252)"/></linearGradient><linearGradient id="bg65" gradientUnits="userSpaceOnUse" x1="0" y1="-400" x2="0" y2="600"><stop offset="0.0000" stop-color="rgb(255,255,255)"/><stop offset="0.4063" stop-color="rgb(254,254,255)"/><stop offset="0.5944" stop-color="rgb(226,228,238)"/><stop offset="0.6571" stop-color="rgb(219,222,233)"/><stop offset="0.6779" stop-color="rgb(219,222,233)"/><stop offset="0.7179" stop-color="rgb(231,233,240)"/><stop offset="0.7711" stop-color="rgb(252,252,253)"/><stop offset="0.9000" stop-color="rgb(254,254,254)"/><stop offset="0.9630" stop-color="rgb(249,250,252)"/><stop offset="1.0000" stop-color="rgb(249,250,252)"/></linearGradient><linearGradient id="bg66" gradientUnits="userSpaceOnUse" x1="0" y1="-400" x2="0" y2="600"><stop offset="0.0000" stop-color="rgb(255,255,255)"/><stop offset="0.4009" stop-color="rgb(254,254,255)"/><stop offset="0.5929" stop-color="rgb(226,228,238)"/><stop offset="0.6569" stop-color="rgb(219,222,233)"/><stop offset="0.6777" stop-color="rgb(219,222,233)"/><stop offset="0.7178" stop-color="rgb(230,232,240)"/><stop offset="0.7709" stop-color="rgb(252,252,253)"/><stop offset="0.9000" stop-color="rgb(254,254,254)"/><stop offset="0.9630" stop-color="rgb(249,250,252)"/><stop offset="1.0000" stop-color="rgb(249,250,252)"/></linearGradient><linearGradient id="bg67" gradientUnits="userSpaceOnUse" x1="0" y1="-400" x2="0" y2="600"><stop offset="0.0000" stop-color="rgb(255,255,255)"/><stop offset="0.3955" stop-color="rgb(254,254,255)"/><stop offset="0.5914" stop-color="rgb(226,228,238)"/><stop offset="0.6567" stop-color="rgb(219,222,233)"/><stop offset="0.6775" stop-color="rgb(219,222,233)"/><stop offset="0.7176" stop-color="rgb(230,232,240)"/><stop offset="0.7708" stop-color="rgb(252,252,253)"/><stop offset="0.9000" stop-color="rgb(254,254,254)"/><stop offset="0.9630" stop-color="rgb(249,250,252)"/><stop offset="1.0000" stop-color="rgb(249,250,252)"/></linearGradient><linearGradient id="bg68" gradientUnits="userSpaceOnUse" x1="0" y1="-400" x2="0" y2="600"><stop offset="0.0000" stop-color="rgb(255,255,255)"/><stop offset="0.3901" stop-color="rgb(254,254,255)"/><stop offset="0.5900" stop-color="rgb(226,228,237)"/><stop offset="0.6566" stop-color="rgb(219,222,233)"/><stop offset="0.6773" stop-color="rgb(219,222,233)"/><stop offset="0.7175" stop-color="rgb(230,232,240)"/><stop offset="0.7706" stop-color="rgb(252,252,253)"/><stop offset="0.9000" stop-color="rgb(254,254,254)"/><stop offset="0.9630" stop-color="rgb(249,250,252)"/><stop offset="1.0000" stop-color="rgb(249,250,252)"/></linearGradient><linearGradient id="bg69" gradientUnits="userSpaceOnUse" x1="0" y1="-400" x2="0" y2="600"><stop offset="0.0000" stop-color="rgb(255,255,255)"/><stop offset="0.3847" stop-color="rgb(254,254,255)"/><stop offset="0.5885" stop-color="rgb(226,228,237)"/><stop offset="0.6564" stop-color="rgb(219,222,233)"/><stop offset="0.6771" stop-color="rgb(219,222,233)"/><stop offset="0.7173" stop-color="rgb(230,232,240)"/><stop offset="0.7704" stop-color="rgb(252,252,253)"/><stop offset="0.9000" stop-color="rgb(254,254,254)"/><stop offset="0.9630" stop-color="rgb(249,250,252)"/><stop offset="1.0000" stop-color="rgb(249,250,252)"/></linearGradient><linearGradient id="bg70" gradientUnits="userSpaceOnUse" x1="0" y1="-400" x2="0" y2="600"><stop offset="0.0000" stop-color="rgb(255,255,255)"/><stop offset="0.3793" stop-color="rgb(254,254,255)"/><stop offset="0.5870" stop-color="rgb(226,228,237)"/><stop offset="0.6562" stop-color="rgb(219,222,233)"/><stop offset="0.6769" stop-color="rgb(219,222,233)"/><stop offset="0.7172" stop-color="rgb(230,232,240)"/><stop offset="0.7702" stop-color="rgb(252,252,253)"/><stop offset="0.9000" stop-color="rgb(254,254,254)"/><stop offset="0.9630" stop-color="rgb(249,250,252)"/><stop offset="1.0000" stop-color="rgb(249,250,252)"/></linearGradient><linearGradient id="bg71" gradientUnits="userSpaceOnUse" x1="0" y1="-400" x2="0" y2="600"><stop offset="0.0000" stop-color="rgb(255,255,255)"/><stop offset="0.3739" stop-color="rgb(254,254,255)"/><stop offset="0.5855" stop-color="rgb(226,228,237)"/><stop offset="0.6561" stop-color="rgb(219,222,233)"/><stop offset="0.6768" stop-color="rgb(219,222,233)"/><stop offset="0.7171" stop-color="rgb(230,232,240)"/><stop offset="0.7701" stop-color="rgb(252,252,253)"/><stop offset="0.9000" stop-color="rgb(254,254,254)"/><stop offset="0.9630" stop-color="rgb(249,250,252)"/><stop offset="1.0000" stop-color="rgb(249,250,252)"/></linearGradient><linearGradient id="bg72" gradientUnits="userSpaceOnUse" x1="0" y1="-400" x2="0" y2="600"><stop offset="0.0000" stop-color="rgb(255,255,255)"/><stop offset="0.3685" stop-color="rgb(254,254,255)"/><stop offset="0.5841" stop-color="rgb(226,228,237)"/><stop offset="0.6559" stop-color="rgb(219,222,233)"/><stop offset="0.6766" stop-color="rgb(219,222,233)"/><stop offset="0.7169" stop-color="rgb(230,232,240)"/><stop offset="0.7699" stop-color="rgb(252,252,253)"/><stop offset="0.9000" stop-color="rgb(254,254,254)"/><stop offset="0.9630" stop-color="rgb(249,250,252)"/><stop offset="1.0000" stop-color="rgb(249,250,252)"/></linearGradient><linearGradient id="bg73" gradientUnits="userSpaceOnUse" x1="0" y1="-400" x2="0" y2="600"><stop offset="0.0000" stop-color="rgb(255,255,255)"/><stop offset="0.3631" stop-color="rgb(254,254,255)"/><stop offset="0.5826" stop-color="rgb(226,228,237)"/><stop offset="0.6558" stop-color="rgb(219,222,233)"/><stop offset="0.6764" stop-color="rgb(219,222,233)"/><stop offset="0.7168" stop-color="rgb(230,232,240)"/><stop offset="0.7698" stop-color="rgb(252,252,253)"/><stop offset="0.9000" stop-color="rgb(254,254,254)"/><stop offset="0.9630" stop-color="rgb(249,250,252)"/><stop offset="1.0000" stop-color="rgb(249,250,252)"/></linearGradient><linearGradient id="bg74" gradientUnits="userSpaceOnUse" x1="0" y1="-400" x2="0" y2="600"><stop offset="0.0000" stop-color="rgb(255,255,255)"/><stop offset="0.3577" stop-color="rgb(254,254,255)"/><stop offset="0.5811" stop-color="rgb(226,228,237)"/><stop offset="0.6556" stop-color="rgb(218,221,233)"/><stop offset="0.6762" stop-color="rgb(218,221,233)"/><stop offset="0.7167" stop-color="rgb(230,232,240)"/><stop offset="0.7696" stop-color="rgb(252,252,253)"/><stop offset="0.9000" stop-color="rgb(254,254,254)"/><stop offset="0.9630" stop-color="rgb(249,250,252)"/><stop offset="1.0000" stop-color="rgb(249,250,252)"/></linearGradient><linearGradient id="bg75" gradientUnits="userSpaceOnUse" x1="0" y1="-400" x2="0" y2="600"><stop offset="0.0000" stop-color="rgb(255,255,255)"/><stop offset="0.3523" stop-color="rgb(254,254,255)"/><stop offset="0.5796" stop-color="rgb(226,228,237)"/><stop offset="0.6554" stop-color="rgb(218,221,233)"/><stop offset="0.6760" stop-color="rgb(218,221,233)"/><stop offset="0.7165" stop-color="rgb(230,232,240)"/><stop offset="0.7694" stop-color="rgb(252,252,253)"/><stop offset="0.9000" stop-color="rgb(254,254,254)"/><stop offset="0.9630" stop-color="rgb(249,250,252)"/><stop offset="1.0000" stop-color="rgb(249,250,252)"/></linearGradient><linearGradient id="bg76" gradientUnits="userSpaceOnUse" x1="0" y1="-400" x2="0" y2="600"><stop offset="0.0000" stop-color="rgb(255,255,255)"/><stop offset="0.3469" stop-color="rgb(254,254,255)"/><stop offset="0.5782" stop-color="rgb(226,228,237)"/><stop offset="0.6552" stop-color="rgb(218,221,232)"/><stop offset="0.6758" stop-color="rgb(218,221,232)"/><stop offset="0.7164" stop-color="rgb(230,232,239)"/><stop offset="0.7692" stop-color="rgb(252,252,253)"/><stop offset="0.9000" stop-color="rgb(254,254,254)"/><stop offset="0.9630" stop-color="rgb(249,250,252)"/><stop offset="1.0000" stop-color="rgb(249,250,252)"/></linearGradient><linearGradient id="bg77" gradientUnits="userSpaceOnUse" x1="0" y1="-400" x2="0" y2="600"><stop offset="0.0000" stop-color="rgb(255,255,255)"/><stop offset="0.3415" stop-color="rgb(254,254,255)"/><stop offset="0.5767" stop-color="rgb(226,228,237)"/><stop offset="0.6551" stop-color="rgb(218,221,232)"/><stop offset="0.6756" stop-color="rgb(218,221,232)"/><stop offset="0.7162" stop-color="rgb(230,232,239)"/><stop offset="0.7691" stop-color="rgb(252,252,253)"/><stop offset="0.9000" stop-color="rgb(254,254,254)"/><stop offset="0.9630" stop-color="rgb(249,250,252)"/><stop offset="1.0000" stop-color="rgb(249,250,252)"/></linearGradient><linearGradient id="bg78" gradientUnits="userSpaceOnUse" x1="0" y1="-400" x2="0" y2="600"><stop offset="0.0000" stop-color="rgb(255,255,255)"/><stop offset="0.3355" stop-color="rgb(254,254,255)"/><stop offset="0.5751" stop-color="rgb(226,228,237)"/><stop offset="0.6549" stop-color="rgb(218,221,232)"/><stop offset="0.6755" stop-color="rgb(218,221,232)"/><stop offset="0.7161" stop-color="rgb(229,231,239)"/><stop offset="0.7689" stop-color="rgb(252,252,253)"/><stop offset="0.9000" stop-color="rgb(254,254,254)"/><stop offset="0.9630" stop-color="rgb(249,250,252)"/><stop offset="1.0000" stop-color="rgb(249,250,252)"/></linearGradient><linearGradient id="bg79" gradientUnits="userSpaceOnUse" x1="0" y1="-400" x2="0" y2="600"><stop offset="0.0000" stop-color="rgb(255,255,255)"/><stop offset="0.3292" stop-color="rgb(254,254,255)"/><stop offset="0.5734" stop-color="rgb(226,228,237)"/><stop offset="0.6548" stop-color="rgb(218,221,232)"/><stop offset="0.6753" stop-color="rgb(218,221,232)"/><stop offset="0.7160" stop-color="rgb(229,231,239)"/><stop offset="0.7688" stop-color="rgb(252,252,253)"/><stop offset="0.9000" stop-color="rgb(254,254,254)"/><stop offset="0.9630" stop-color="rgb(249,250,252)"/><stop offset="1.0000" stop-color="rgb(249,250,252)"/></linearGradient><linearGradient id="bg80" gradientUnits="userSpaceOnUse" x1="0" y1="-400" x2="0" y2="600"><stop offset="0.0000" stop-color="rgb(255,255,255)"/><stop offset="0.3229" stop-color="rgb(254,254,255)"/><stop offset="0.5717" stop-color="rgb(226,228,237)"/><stop offset="0.6546" stop-color="rgb(218,221,232)"/><stop offset="0.6751" stop-color="rgb(218,221,232)"/><stop offset="0.7158" stop-color="rgb(229,231,239)"/><stop offset="0.7686" stop-color="rgb(252,252,253)"/><stop offset="0.9000" stop-color="rgb(254,254,254)"/><stop offset="0.9630" stop-color="rgb(249,250,252)"/><stop offset="1.0000" stop-color="rgb(249,250,252)"/></linearGradient><linearGradient id="bg81" gradientUnits="userSpaceOnUse" x1="0" y1="-400" x2="0" y2="600"><stop offset="0.0000" stop-color="rgb(255,255,255)"/><stop offset="0.3166" stop-color="rgb(254,254,255)"/><stop offset="0.5700" stop-color="rgb(225,227,237)"/><stop offset="0.6544" stop-color="rgb(218,221,232)"/><stop offset="0.6749" stop-color="rgb(218,221,232)"/><stop offset="0.7157" stop-color="rgb(229,231,239)"/><stop offset="0.7684" stop-color="rgb(252,252,253)"/><stop offset="0.9000" stop-color="rgb(254,254,254)"/><stop offset="0.9630" stop-color="rgb(249,250,252)"/><stop offset="1.0000" stop-color="rgb(249,250,252)"/></linearGradient><linearGradient id="bg82" gradientUnits="userSpaceOnUse" x1="0" y1="-400" x2="0" y2="600"><stop offset="0.0000" stop-color="rgb(255,255,255)"/><stop offset="0.3103" stop-color="rgb(254,254,255)"/><stop offset="0.5683" stop-color="rgb(225,227,237)"/><stop offset="0.6542" stop-color="rgb(218,221,232)"/><stop offset="0.6747" stop-color="rgb(218,221,232)"/><stop offset="0.7155" stop-color="rgb(229,231,239)"/><stop offset="0.7682" stop-color="rgb(252,252,253)"/><stop offset="0.9000" stop-color="rgb(254,254,254)"/><stop offset="0.9630" stop-color="rgb(249,250,252)"/><stop offset="1.0000" stop-color="rgb(249,250,252)"/></linearGradient><linearGradient id="bg83" gradientUnits="userSpaceOnUse" x1="0" y1="-400" x2="0" y2="600"><stop offset="0.0000" stop-color="rgb(255,255,255)"/><stop offset="0.3040" stop-color="rgb(254,254,255)"/><stop offset="0.5666" stop-color="rgb(225,227,237)"/><stop offset="0.6541" stop-color="rgb(218,221,232)"/><stop offset="0.6745" stop-color="rgb(218,221,232)"/><stop offset="0.7154" stop-color="rgb(229,231,239)"/><stop offset="0.7681" stop-color="rgb(252,252,253)"/><stop offset="0.9000" stop-color="rgb(254,254,254)"/><stop offset="0.9630" stop-color="rgb(249,250,252)"/><stop offset="1.0000" stop-color="rgb(249,250,252)"/></linearGradient><linearGradient id="bg84" gradientUnits="userSpaceOnUse" x1="0" y1="-400" x2="0" y2="600"><stop offset="0.0000" stop-color="rgb(255,255,255)"/><stop offset="0.2977" stop-color="rgb(254,254,255)"/><stop offset="0.5649" stop-color="rgb(225,227,237)"/><stop offset="0.6539" stop-color="rgb(218,221,232)"/><stop offset="0.6744" stop-color="rgb(218,221,232)"/><stop offset="0.7153" stop-color="rgb(229,231,239)"/><stop offset="0.7679" stop-color="rgb(252,252,253)"/><stop offset="0.9000" stop-color="rgb(254,254,254)"/><stop offset="0.9630" stop-color="rgb(249,250,252)"/><stop offset="1.0000" stop-color="rgb(249,250,252)"/></linearGradient><linearGradient id="bg85" gradientUnits="userSpaceOnUse" x1="0" y1="-400" x2="0" y2="600"><stop offset="0.0000" stop-color="rgb(255,255,255)"/><stop offset="0.2915" stop-color="rgb(254,254,255)"/><stop offset="0.5632" stop-color="rgb(225,227,237)"/><stop offset="0.6538" stop-color="rgb(218,221,232)"/><stop offset="0.6742" stop-color="rgb(218,221,232)"/><stop offset="0.7151" stop-color="rgb(229,231,239)"/><stop offset="0.7678" stop-color="rgb(252,252,253)"/><stop offset="0.9000" stop-color="rgb(254,254,254)"/><stop offset="0.9630" stop-color="rgb(249,250,252)"/><stop offset="1.0000" stop-color="rgb(249,250,252)"/></linearGradient><linearGradient id="bg86" gradientUnits="userSpaceOnUse" x1="0" y1="-400" x2="0" y2="600"><stop offset="0.0000" stop-color="rgb(255,255,255)"/><stop offset="0.2852" stop-color="rgb(254,254,255)"/><stop offset="0.5615" stop-color="rgb(225,227,237)"/><stop offset="0.6536" stop-color="rgb(218,221,232)"/><stop offset="0.6740" stop-color="rgb(218,221,232)"/><stop offset="0.7150" stop-color="rgb(229,231,239)"/><stop offset="0.7676" stop-color="rgb(252,252,253)"/><stop offset="0.9000" stop-color="rgb(254,254,254)"/><stop offset="0.9630" stop-color="rgb(249,250,252)"/><stop offset="1.0000" stop-color="rgb(249,250,252)"/></linearGradient><linearGradient id="bg87" gradientUnits="userSpaceOnUse" x1="0" y1="-400" x2="0" y2="600"><stop offset="0.0000" stop-color="rgb(255,255,255)"/><stop offset="0.2789" stop-color="rgb(254,254,255)"/><stop offset="0.5598" stop-color="rgb(225,227,237)"/><stop offset="0.6534" stop-color="rgb(218,221,232)"/><stop offset="0.6738" stop-color="rgb(218,221,232)"/><stop offset="0.7148" stop-color="rgb(229,231,239)"/><stop offset="0.7674" stop-color="rgb(252,252,253)"/><stop offset="0.9000" stop-color="rgb(254,254,254)"/><stop offset="0.9630" stop-color="rgb(249,250,252)"/><stop offset="1.0000" stop-color="rgb(249,250,252)"/></linearGradient><linearGradient id="bg88" gradientUnits="userSpaceOnUse" x1="0" y1="-400" x2="0" y2="600"><stop offset="0.0000" stop-color="rgb(255,255,255)"/><stop offset="0.2726" stop-color="rgb(254,254,255)"/><stop offset="0.5581" stop-color="rgb(225,227,237)"/><stop offset="0.6532" stop-color="rgb(217,220,232)"/><stop offset="0.6736" stop-color="rgb(217,220,232)"/><stop offset="0.7147" stop-color="rgb(229,231,239)"/><stop offset="0.7672" stop-color="rgb(252,252,253)"/><stop offset="0.9000" stop-color="rgb(254,254,254)"/><stop offset="0.9630" stop-color="rgb(249,250,252)"/><stop offset="1.0000" stop-color="rgb(249,250,252)"/></linearGradient><linearGradient id="bg89" gradientUnits="userSpaceOnUse" x1="0" y1="-400" x2="0" y2="600"><stop offset="0.0000" stop-color="rgb(255,255,255)"/><stop offset="0.2663" stop-color="rgb(254,254,255)"/><stop offset="0.5564" stop-color="rgb(225,227,237)"/><stop offset="0.6531" stop-color="rgb(217,220,232)"/><stop offset="0.6734" stop-color="rgb(217,220,232)"/><stop offset="0.7146" stop-color="rgb(229,231,239)"/><stop offset="0.7671" stop-color="rgb(252,252,253)"/><stop offset="0.9000" stop-color="rgb(254,254,254)"/><stop offset="0.9630" stop-color="rgb(249,250,252)"/><stop offset="1.0000" stop-color="rgb(249,250,252)"/></linearGradient><linearGradient id="bg90" gradientUnits="userSpaceOnUse" x1="0" y1="-400" x2="0" y2="600"><stop offset="0.0000" stop-color="rgb(255,255,255)"/><stop offset="0.2600" stop-color="rgb(254,254,255)"/><stop offset="0.5547" stop-color="rgb(225,227,237)"/><stop offset="0.6529" stop-color="rgb(217,220,232)"/><stop offset="0.6732" stop-color="rgb(217,220,232)"/><stop offset="0.7144" stop-color="rgb(228,230,239)"/><stop offset="0.7669" stop-color="rgb(252,252,253)"/><stop offset="0.9000" stop-color="rgb(254,254,254)"/><stop offset="0.9630" stop-color="rgb(249,250,252)"/><stop offset="1.0000" stop-color="rgb(249,250,252)"/></linearGradient><linearGradient id="bg91" gradientUnits="userSpaceOnUse" x1="0" y1="-400" x2="0" y2="600"><stop offset="0.0000" stop-color="rgb(255,255,255)"/><stop offset="0.2537" stop-color="rgb(254,254,255)"/><stop offset="0.5530" stop-color="rgb(225,227,237)"/><stop offset="0.6528" stop-color="rgb(217,220,232)"/><stop offset="0.6731" stop-color="rgb(217,220,232)"/><stop offset="0.7143" stop-color="rgb(228,230,239)"/><stop offset="0.7668" stop-color="rgb(252,252,253)"/><stop offset="0.9000" stop-color="rgb(254,254,254)"/><stop offset="0.9630" stop-color="rgb(249,250,252)"/><stop offset="1.0000" stop-color="rgb(249,250,252)"/></linearGradient><linearGradient id="bg92" gradientUnits="userSpaceOnUse" x1="0" y1="-400" x2="0" y2="600"><stop offset="0.0000" stop-color="rgb(255,255,255)"/><stop offset="0.2474" stop-color="rgb(254,254,255)"/><stop offset="0.5513" stop-color="rgb(225,227,237)"/><stop offset="0.6526" stop-color="rgb(217,220,232)"/><stop offset="0.6729" stop-color="rgb(217,220,232)"/><stop offset="0.7142" stop-color="rgb(228,230,239)"/><stop offset="0.7666" stop-color="rgb(252,252,253)"/><stop offset="0.9000" stop-color="rgb(254,254,254)"/><stop offset="0.9630" stop-color="rgb(249,250,252)"/><stop offset="1.0000" stop-color="rgb(249,250,252)"/></linearGradient><linearGradient id="bg93" gradientUnits="userSpaceOnUse" x1="0" y1="-400" x2="0" y2="600"><stop offset="0.0000" stop-color="rgb(255,255,255)"/><stop offset="0.2412" stop-color="rgb(254,254,255)"/><stop offset="0.5496" stop-color="rgb(225,227,237)"/><stop offset="0.6524" stop-color="rgb(217,220,232)"/><stop offset="0.6727" stop-color="rgb(217,220,232)"/><stop offset="0.7140" stop-color="rgb(228,230,239)"/><stop offset="0.7664" stop-color="rgb(252,252,253)"/><stop offset="0.9000" stop-color="rgb(254,254,254)"/><stop offset="0.9630" stop-color="rgb(249,250,252)"/><stop offset="1.0000" stop-color="rgb(249,250,252)"/></linearGradient><linearGradient id="bg94" gradientUnits="userSpaceOnUse" x1="0" y1="-400" x2="0" y2="600"><stop offset="0.0000" stop-color="rgb(255,255,255)"/><stop offset="0.2349" stop-color="rgb(254,254,255)"/><stop offset="0.5479" stop-color="rgb(225,227,236)"/><stop offset="0.6522" stop-color="rgb(217,220,232)"/><stop offset="0.6725" stop-color="rgb(217,220,232)"/><stop offset="0.7139" stop-color="rgb(228,230,239)"/><stop offset="0.7662" stop-color="rgb(252,252,253)"/><stop offset="0.9000" stop-color="rgb(254,254,254)"/><stop offset="0.9630" stop-color="rgb(249,250,252)"/><stop offset="1.0000" stop-color="rgb(249,250,252)"/></linearGradient><linearGradient id="bg95" gradientUnits="userSpaceOnUse" x1="0" y1="-400" x2="0" y2="600"><stop offset="0.0000" stop-color="rgb(255,255,255)"/><stop offset="0.2286" stop-color="rgb(254,254,255)"/><stop offset="0.5462" stop-color="rgb(225,227,236)"/><stop offset="0.6521" stop-color="rgb(217,220,232)"/><stop offset="0.6723" stop-color="rgb(217,220,232)"/><stop offset="0.7137" stop-color="rgb(228,230,239)"/><stop offset="0.7661" stop-color="rgb(252,252,253)"/><stop offset="0.9000" stop-color="rgb(254,254,254)"/><stop offset="0.9630" stop-color="rgb(249,250,252)"/><stop offset="1.0000" stop-color="rgb(249,250,252)"/></linearGradient><linearGradient id="bg96" gradientUnits="userSpaceOnUse" x1="0" y1="-400" x2="0" y2="600"><stop offset="0.0000" stop-color="rgb(255,255,255)"/><stop offset="0.2223" stop-color="rgb(254,254,255)"/><stop offset="0.5445" stop-color="rgb(225,227,236)"/><stop offset="0.6519" stop-color="rgb(217,220,232)"/><stop offset="0.6721" stop-color="rgb(217,220,232)"/><stop offset="0.7136" stop-color="rgb(228,230,239)"/><stop offset="0.7659" stop-color="rgb(252,252,253)"/><stop offset="0.9000" stop-color="rgb(254,254,254)"/><stop offset="0.9630" stop-color="rgb(249,250,252)"/><stop offset="1.0000" stop-color="rgb(249,250,252)"/></linearGradient><linearGradient id="bg97" gradientUnits="userSpaceOnUse" x1="0" y1="-400" x2="0" y2="600"><stop offset="0.0000" stop-color="rgb(255,255,255)"/><stop offset="0.2160" stop-color="rgb(254,254,255)"/><stop offset="0.5428" stop-color="rgb(225,227,236)"/><stop offset="0.6518" stop-color="rgb(217,220,231)"/><stop offset="0.6719" stop-color="rgb(217,220,231)"/><stop offset="0.7135" stop-color="rgb(228,230,238)"/><stop offset="0.7658" stop-color="rgb(252,252,253)"/><stop offset="0.9000" stop-color="rgb(254,254,254)"/><stop offset="0.9630" stop-color="rgb(249,250,252)"/><stop offset="1.0000" stop-color="rgb(249,250,252)"/></linearGradient><linearGradient id="bg98" gradientUnits="userSpaceOnUse" x1="0" y1="-400" x2="0" y2="600"><stop offset="0.0000" stop-color="rgb(255,255,255)"/><stop offset="0.2097" stop-color="rgb(254,254,255)"/><stop offset="0.5411" stop-color="rgb(225,227,236)"/><stop offset="0.6516" stop-color="rgb(217,220,231)"/><stop offset="0.6718" stop-color="rgb(217,220,231)"/><stop offset="0.7133" stop-color="rgb(228,230,238)"/><stop offset="0.7656" stop-color="rgb(252,252,253)"/><stop offset="0.9000" stop-color="rgb(254,254,254)"/><stop offset="0.9630" stop-color="rgb(249,250,252)"/><stop offset="1.0000" stop-color="rgb(249,250,252)"/></linearGradient><linearGradient id="bg99" gradientUnits="userSpaceOnUse" x1="0" y1="-400" x2="0" y2="600"><stop offset="0.0000" stop-color="rgb(255,255,255)"/><stop offset="0.2034" stop-color="rgb(254,254,255)"/><stop offset="0.5394" stop-color="rgb(224,226,236)"/><stop offset="0.6514" stop-color="rgb(217,220,231)"/><stop offset="0.6716" stop-color="rgb(217,220,231)"/><stop offset="0.7132" stop-color="rgb(228,230,238)"/><stop offset="0.7654" stop-color="rgb(252,252,253)"/><stop offset="0.9000" stop-color="rgb(254,254,254)"/><stop offset="0.9630" stop-color="rgb(249,250,252)"/><stop offset="1.0000" stop-color="rgb(249,250,252)"/></linearGradient><linearGradient id="bg100" gradientUnits="userSpaceOnUse" x1="0" y1="-400" x2="0" y2="600"><stop offset="0.0000" stop-color="rgb(255,255,255)"/><stop offset="0.1972" stop-color="rgb(254,254,255)"/><stop offset="0.5377" stop-color="rgb(224,226,236)"/><stop offset="0.6512" stop-color="rgb(217,220,231)"/><stop offset="0.6714" stop-color="rgb(217,220,231)"/><stop offset="0.7130" stop-color="rgb(228,230,238)"/><stop offset="0.7652" stop-color="rgb(252,252,253)"/><stop offset="0.9000" stop-color="rgb(254,254,254)"/><stop offset="0.9630" stop-color="rgb(249,250,252)"/><stop offset="1.0000" stop-color="rgb(249,250,252)"/></linearGradient><linearGradient id="bg101" gradientUnits="userSpaceOnUse" x1="0" y1="-400" x2="0" y2="600"><stop offset="0.0000" stop-color="rgb(255,255,255)"/><stop offset="0.1909" stop-color="rgb(254,254,255)"/><stop offset="0.5360" stop-color="rgb(224,226,236)"/><stop offset="0.6511" stop-color="rgb(216,219,231)"/><stop offset="0.6712" stop-color="rgb(216,219,231)"/><stop offset="0.7129" stop-color="rgb(228,230,238)"/><stop offset="0.7651" stop-color="rgb(252,252,253)"/><stop offset="0.9000" stop-color="rgb(254,254,254)"/><stop offset="0.9630" stop-color="rgb(249,250,252)"/><stop offset="1.0000" stop-color="rgb(249,250,252)"/></linearGradient><linearGradient id="bg102" gradientUnits="userSpaceOnUse" x1="0" y1="-400" x2="0" y2="600"><stop offset="0.0000" stop-color="rgb(255,255,255)"/><stop offset="0.1846" stop-color="rgb(254,254,255)"/><stop offset="0.5343" stop-color="rgb(224,226,236)"/><stop offset="0.6509" stop-color="rgb(216,219,231)"/><stop offset="0.6710" stop-color="rgb(216,219,231)"/><stop offset="0.7128" stop-color="rgb(227,229,238)"/><stop offset="0.7649" stop-color="rgb(252,252,253)"/><stop offset="0.9000" stop-color="rgb(254,254,254)"/><stop offset="0.9630" stop-color="rgb(249,250,252)"/><stop offset="1.0000" stop-color="rgb(249,250,252)"/></linearGradient><linearGradient id="bg103" gradientUnits="userSpaceOnUse" x1="0" y1="-400" x2="0" y2="600"><stop offset="0.0000" stop-color="rgb(255,255,255)"/><stop offset="0.1783" stop-color="rgb(254,254,255)"/><stop offset="0.5326" stop-color="rgb(224,226,236)"/><stop offset="0.6508" stop-color="rgb(216,219,231)"/><stop offset="0.6708" stop-color="rgb(216,219,231)"/><stop offset="0.7126" stop-color="rgb(227,229,238)"/><stop offset="0.7648" stop-color="rgb(252,252,253)"/><stop offset="0.9000" stop-color="rgb(254,254,254)"/><stop offset="0.9630" stop-color="rgb(249,250,252)"/><stop offset="1.0000" stop-color="rgb(249,250,252)"/></linearGradient><linearGradient id="bg104" gradientUnits="userSpaceOnUse" x1="0" y1="-400" x2="0" y2="600"><stop offset="0.0000" stop-color="rgb(255,255,255)"/><stop offset="0.1720" stop-color="rgb(254,254,255)"/><stop offset="0.5309" stop-color="rgb(224,226,236)"/><stop offset="0.6506" stop-color="rgb(216,219,231)"/><stop offset="0.6706" stop-color="rgb(216,219,231)"/><stop offset="0.7125" stop-color="rgb(227,229,238)"/><stop offset="0.7646" stop-color="rgb(252,252,253)"/><stop offset="0.9000" stop-color="rgb(254,254,254)"/><stop offset="0.9630" stop-color="rgb(249,250,252)"/><stop offset="1.0000" stop-color="rgb(249,250,252)"/></linearGradient><linearGradient id="bg105" gradientUnits="userSpaceOnUse" x1="0" y1="-400" x2="0" y2="600"><stop offset="0.0000" stop-color="rgb(255,255,255)"/><stop offset="0.1657" stop-color="rgb(254,254,255)"/><stop offset="0.5292" stop-color="rgb(224,226,236)"/><stop offset="0.6504" stop-color="rgb(216,219,231)"/><stop offset="0.6705" stop-color="rgb(216,219,231)"/><stop offset="0.7123" stop-color="rgb(227,229,238)"/><stop offset="0.7644" stop-color="rgb(252,252,253)"/><stop offset="0.9000" stop-color="rgb(254,254,254)"/><stop offset="0.9630" stop-color="rgb(249,250,252)"/><stop offset="1.0000" stop-color="rgb(249,250,252)"/></linearGradient><linearGradient id="bg106" gradientUnits="userSpaceOnUse" x1="0" y1="-400" x2="0" y2="600"><stop offset="0.0000" stop-color="rgb(255,255,255)"/><stop offset="0.1594" stop-color="rgb(254,254,255)"/><stop offset="0.5275" stop-color="rgb(224,226,236)"/><stop offset="0.6502" stop-color="rgb(216,219,231)"/><stop offset="0.6703" stop-color="rgb(216,219,231)"/><stop offset="0.7122" stop-color="rgb(227,229,238)"/><stop offset="0.7642" stop-color="rgb(252,252,253)"/><stop offset="0.9000" stop-color="rgb(254,254,254)"/><stop offset="0.9630" stop-color="rgb(249,250,252)"/><stop offset="1.0000" stop-color="rgb(249,250,252)"/></linearGradient><linearGradient id="bg107" gradientUnits="userSpaceOnUse" x1="0" y1="-400" x2="0" y2="600"><stop offset="0.0000" stop-color="rgb(255,255,255)"/><stop offset="0.1531" stop-color="rgb(254,254,255)"/><stop offset="0.5258" stop-color="rgb(224,226,236)"/><stop offset="0.6501" stop-color="rgb(216,219,231)"/><stop offset="0.6701" stop-color="rgb(216,219,231)"/><stop offset="0.7121" stop-color="rgb(227,229,238)"/><stop offset="0.7641" stop-color="rgb(252,252,253)"/><stop offset="0.9000" stop-color="rgb(254,254,254)"/><stop offset="0.9630" stop-color="rgb(249,250,252)"/><stop offset="1.0000" stop-color="rgb(249,250,252)"/></linearGradient></defs><rect x="-0.30" y="0" width="9.60" height="564" fill="url(#bg0)"/><rect x="8.70" y="0" width="9.60" height="564" fill="url(#bg1)"/><rect x="17.70" y="0" width="9.60" height="564" fill="url(#bg2)"/><rect x="26.70" y="0" width="9.60" height="564" fill="url(#bg3)"/><rect x="35.70" y="0" width="9.60" height="564" fill="url(#bg4)"/><rect x="44.70" y="0" width="9.60" height="564" fill="url(#bg5)"/><rect x="53.70" y="0" width="9.60" height="564" fill="url(#bg6)"/><rect x="62.70" y="0" width="9.60" height="564" fill="url(#bg7)"/><rect x="71.70" y="0" width="9.60" height="564" fill="url(#bg8)"/><rect x="80.70" y="0" width="9.60" height="564" fill="url(#bg9)"/><rect x="89.70" y="0" width="9.60" height="564" fill="url(#bg10)"/><rect x="98.70" y="0" width="9.60" height="564" fill="url(#bg11)"/><rect x="107.70" y="0" width="9.60" height="564" fill="url(#bg12)"/><rect x="116.70" y="0" width="9.60" height="564" fill="url(#bg13)"/><rect x="125.70" y="0" width="9.60" height="564" fill="url(#bg14)"/><rect x="134.70" y="0" width="9.60" height="564" fill="url(#bg15)"/><rect x="143.70" y="0" width="9.60" height="564" fill="url(#bg16)"/><rect x="152.70" y="0" width="9.60" height="564" fill="url(#bg17)"/><rect x="161.70" y="0" width="9.60" height="564" fill="url(#bg18)"/><rect x="170.70" y="0" width="9.60" height="564" fill="url(#bg19)"/><rect x="179.70" y="0" width="9.60" height="564" fill="url(#bg20)"/><rect x="188.70" y="0" width="9.60" height="564" fill="url(#bg21)"/><rect x="197.70" y="0" width="9.60" height="564" fill="url(#bg22)"/><rect x="206.70" y="0" width="9.60" height="564" fill="url(#bg23)"/><rect x="215.70" y="0" width="9.60" height="564" fill="url(#bg24)"/><rect x="224.70" y="0" width="9.60" height="564" fill="url(#bg25)"/><rect x="233.70" y="0" width="9.60" height="564" fill="url(#bg26)"/><rect x="242.70" y="0" width="9.60" height="564" fill="url(#bg27)"/><rect x="251.70" y="0" width="9.60" height="564" fill="url(#bg28)"/><rect x="260.70" y="0" width="9.60" height="564" fill="url(#bg29)"/><rect x="269.70" y="0" width="9.60" height="564" fill="url(#bg30)"/><rect x="278.70" y="0" width="9.60" height="564" fill="url(#bg31)"/><rect x="287.70" y="0" width="9.60" height="564" fill="url(#bg32)"/><rect x="296.70" y="0" width="9.60" height="564" fill="url(#bg33)"/><rect x="305.70" y="0" width="9.60" height="564" fill="url(#bg34)"/><rect x="314.70" y="0" width="9.60" height="564" fill="url(#bg35)"/><rect x="323.70" y="0" width="9.60" height="564" fill="url(#bg36)"/><rect x="332.70" y="0" width="9.60" height="564" fill="url(#bg37)"/><rect x="341.70" y="0" width="9.60" height="564" fill="url(#bg38)"/><rect x="350.70" y="0" width="9.60" height="564" fill="url(#bg39)"/><rect x="359.70" y="0" width="9.60" height="564" fill="url(#bg40)"/><rect x="368.70" y="0" width="9.60" height="564" fill="url(#bg41)"/><rect x="377.70" y="0" width="9.60" height="564" fill="url(#bg42)"/><rect x="386.70" y="0" width="9.60" height="564" fill="url(#bg43)"/><rect x="395.70" y="0" width="9.60" height="564" fill="url(#bg44)"/><rect x="404.70" y="0" width="9.60" height="564" fill="url(#bg45)"/><rect x="413.70" y="0" width="9.60" height="564" fill="url(#bg46)"/><rect x="422.70" y="0" width="9.60" height="564" fill="url(#bg47)"/><rect x="431.70" y="0" width="9.60" height="564" fill="url(#bg48)"/><rect x="440.70" y="0" width="9.60" height="564" fill="url(#bg49)"/><rect x="449.70" y="0" width="9.60" height="564" fill="url(#bg50)"/><rect x="458.70" y="0" width="9.60" height="564" fill="url(#bg51)"/><rect x="467.70" y="0" width="9.60" height="564" fill="url(#bg52)"/><rect x="476.70" y="0" width="9.60" height="564" fill="url(#bg53)"/><rect x="485.70" y="0" width="9.60" height="564" fill="url(#bg54)"/><rect x="494.70" y="0" width="9.60" height="564" fill="url(#bg55)"/><rect x="503.70" y="0" width="9.60" height="564" fill="url(#bg56)"/><rect x="512.70" y="0" width="9.60" height="564" fill="url(#bg57)"/><rect x="521.70" y="0" width="9.60" height="564" fill="url(#bg58)"/><rect x="530.70" y="0" width="9.60" height="564" fill="url(#bg59)"/><rect x="539.70" y="0" width="9.60" height="564" fill="url(#bg60)"/><rect x="548.70" y="0" width="9.60" height="564" fill="url(#bg61)"/><rect x="557.70" y="0" width="9.60" height="564" fill="url(#bg62)"/><rect x="566.70" y="0" width="9.60" height="564" fill="url(#bg63)"/><rect x="575.70" y="0" width="9.60" height="564" fill="url(#bg64)"/><rect x="584.70" y="0" width="9.60" height="564" fill="url(#bg65)"/><rect x="593.70" y="0" width="9.60" height="564" fill="url(#bg66)"/><rect x="602.70" y="0" width="9.60" height="564" fill="url(#bg67)"/><rect x="611.70" y="0" width="9.60" height="564" fill="url(#bg68)"/><rect x="620.70" y="0" width="9.60" height="564" fill="url(#bg69)"/><rect x="629.70" y="0" width="9.60" height="564" fill="url(#bg70)"/><rect x="638.70" y="0" width="9.60" height="564" fill="url(#bg71)"/><rect x="647.70" y="0" width="9.60" height="564" fill="url(#bg72)"/><rect x="656.70" y="0" width="9.60" height="564" fill="url(#bg73)"/><rect x="665.70" y="0" width="9.60" height="564" fill="url(#bg74)"/><rect x="674.70" y="0" width="9.60" height="564" fill="url(#bg75)"/><rect x="683.70" y="0" width="9.60" height="564" fill="url(#bg76)"/><rect x="692.70" y="0" width="9.60" height="564" fill="url(#bg77)"/><rect x="701.70" y="0" width="9.60" height="564" fill="url(#bg78)"/><rect x="710.70" y="0" width="9.60" height="564" fill="url(#bg79)"/><rect x="719.70" y="0" width="9.60" height="564" fill="url(#bg80)"/><rect x="728.70" y="0" width="9.60" height="564" fill="url(#bg81)"/><rect x="737.70" y="0" width="9.60" height="564" fill="url(#bg82)"/><rect x="746.70" y="0" width="9.60" height="564" fill="url(#bg83)"/><rect x="755.70" y="0" width="9.60" height="564" fill="url(#bg84)"/><rect x="764.70" y="0" width="9.60" height="564" fill="url(#bg85)"/><rect x="773.70" y="0" width="9.60" height="564" fill="url(#bg86)"/><rect x="782.70" y="0" width="9.60" height="564" fill="url(#bg87)"/><rect x="791.70" y="0" width="9.60" height="564" fill="url(#bg88)"/><rect x="800.70" y="0" width="9.60" height="564" fill="url(#bg89)"/><rect x="809.70" y="0" width="9.60" height="564" fill="url(#bg90)"/><rect x="818.70" y="0" width="9.60" height="564" fill="url(#bg91)"/><rect x="827.70" y="0" width="9.60" height="564" fill="url(#bg92)"/><rect x="836.70" y="0" width="9.60" height="564" fill="url(#bg93)"/><rect x="845.70" y="0" width="9.60" height="564" fill="url(#bg94)"/><rect x="854.70" y="0" width="9.60" height="564" fill="url(#bg95)"/><rect x="863.70" y="0" width="9.60" height="564" fill="url(#bg96)"/><rect x="872.70" y="0" width="9.60" height="564" fill="url(#bg97)"/><rect x="881.70" y="0" width="9.60" height="564" fill="url(#bg98)"/><rect x="890.70" y="0" width="9.60" height="564" fill="url(#bg99)"/><rect x="899.70" y="0" width="9.60" height="564" fill="url(#bg100)"/><rect x="908.70" y="0" width="9.60" height="564" fill="url(#bg101)"/><rect x="917.70" y="0" width="9.60" height="564" fill="url(#bg102)"/><rect x="926.70" y="0" width="9.60" height="564" fill="url(#bg103)"/><rect x="935.70" y="0" width="9.60" height="564" fill="url(#bg104)"/><rect x="944.70" y="0" width="9.60" height="564" fill="url(#bg105)"/><rect x="953.70" y="0" width="9.60" height="564" fill="url(#bg106)"/><rect x="962.70" y="0" width="9.60" height="564" fill="url(#bg107)"/></g>
<defs>
<linearGradient id="gPinkStrip" gradientUnits="userSpaceOnUse" x1="600" y1="190" x2="607" y2="195.5">
 <stop offset="0" stop-color="#e9a6d6"/><stop offset="0.5" stop-color="#ffc6f3"/><stop offset="1" stop-color="#e3a0cf"/>
</linearGradient>
<linearGradient id="gGreenStrip" gradientUnits="userSpaceOnUse" x1="300" y1="345" x2="306.5" y2="350.5">
 <stop offset="0" stop-color="#38cf83"/><stop offset="0.5" stop-color="#5cf7a8"/><stop offset="1" stop-color="#35c97d"/>
</linearGradient>
<linearGradient id="gRoller" gradientUnits="userSpaceOnUse" x1="646" y1="112" x2="659" y2="109">
 <stop offset="0" stop-color="#8d647c"/><stop offset="0.45" stop-color="#be8ead"/><stop offset="1" stop-color="#8a6079"/>
</linearGradient>
<linearGradient id="gAct" x1="0" y1="0" x2="1" y2="0">
 <stop offset="0" stop-color="#b956a6"/><stop offset="0.45" stop-color="#e27fd0"/><stop offset="1" stop-color="#ad4c9a"/>
</linearGradient>
<linearGradient id="gRod" x1="0" y1="0" x2="1" y2="0">
 <stop offset="0" stop-color="#c80000"/><stop offset="0.45" stop-color="#ff2a2a"/><stop offset="1" stop-color="#b00000"/>
</linearGradient>
<linearGradient id="gSeatEdge" x1="0" y1="0" x2="0" y2="1">
 <stop offset="0" stop-color="#6e6ed8"/><stop offset="0.45" stop-color="#8a8aff"/><stop offset="1" stop-color="#6868cc"/>
</linearGradient>
<linearGradient id="gMagLink" gradientUnits="userSpaceOnUse" x1="576" y1="280" x2="587" y2="277">
 <stop offset="0" stop-color="#a8409a"/><stop offset="0.5" stop-color="#d464c4"/><stop offset="1" stop-color="#9c3a8e"/>
</linearGradient>
<linearGradient id="gWhiteRod" gradientUnits="userSpaceOnUse" x1="352" y1="250" x2="366" y2="247">
 <stop offset="0" stop-color="#d8d8dc"/><stop offset="0.5" stop-color="#ffffff"/><stop offset="1" stop-color="#cfcfd4"/>
</linearGradient>
<linearGradient id="gRedBar" x1="0" y1="0" x2="0" y2="1">
 <stop offset="0" stop-color="#ff3030"/><stop offset="0.5" stop-color="#f00000"/><stop offset="1" stop-color="#b80000"/>
</linearGradient>
</defs>
<g id="rail" stroke-linejoin="round">
<polygon points="199.00,404.40 198.00,407.00 198.00,430.00 213.50,493.00 214.15,469.60 214.00,466.00 213.40,459.40 207.80,440.40 207.30,433.40 206.50,429.60 200.30,412.40" fill="#555555" stroke="#000" stroke-width="1" />
<polygon points="199.00,404.40 639.25,392.00 640.50,399.50 200.30,412.40" fill="#9b9b9b" stroke="#000" stroke-width="1.15" />
<path d="M199.6 406.9 L639.6 394.3" stroke="#000" stroke-width="0.9" fill="none"/>
<polygon points="199.00,404.40 639.25,392.00 639.60,394.30 199.60,406.90" fill="#8a8a8a" stroke="#000" stroke-width="1.0" />
<polygon points="200.30,412.40 640.50,399.50 646.25,417.00 206.50,429.60" fill="#747474" stroke="#000" stroke-width="1.15" />
<polygon points="206.50,429.60 646.25,417.00 647.50,419.60 207.30,433.40" fill="#878787" stroke="#000" stroke-width="1.0" />
<polygon points="207.30,433.40 647.50,419.60 648.00,427.50 207.80,440.40" fill="#9b9b9b" stroke="#000" stroke-width="1.15" />
<polygon points="207.80,440.40 648.00,427.50 653.00,446.50 213.40,459.40" fill="#747474" stroke="#000" stroke-width="1.15" />
<polygon points="213.40,459.40 653.00,446.50 654.00,454.50 214.00,466.00" fill="#9b9b9b" stroke="#000" stroke-width="1.15" />
<polygon points="214.00,466.00 654.00,454.50 654.50,457.00 214.15,469.60" fill="#8a8a8a" stroke="#000" stroke-width="1.0" />
<polygon points="214.15,469.60 654.50,457.00 653.60,289.00 727.30,286.50 728.00,478.00 213.50,493.00" fill="#969696" stroke="#000" stroke-width="1.15" />
<polygon points="638.50,226.50 653.60,289.00 654.50,457.00 654.00,454.50 653.00,446.50 648.00,427.50 647.50,419.60 646.25,417.00 640.50,399.50 639.25,392.00" fill="#555555" stroke="#000" stroke-width="1.15" />
<polygon points="638.50,226.50 711.90,224.50 727.30,286.50 653.60,289.00" fill="#777777" stroke="#000" stroke-width="1.15" />
</g>
<g id="rack">
<polygon points="305.30,436.00 373.50,434.60 373.50,440.00 305.30,441.80" fill="#d3ae68" stroke="#000" stroke-width="0.9" />
<path d="M305.6 436.0 L373.5 434.6" stroke="#0c0c0c" stroke-width="2.6" stroke-dasharray="1.3 0.75" fill="none"/>
<path d="M305.6 437.5 L373.5 436.1" stroke="#d3ae68" stroke-width="0.9" stroke-dasharray="0.7 1.35" stroke-dashoffset="-1.3" fill="none"/>
</g>
<g id="backframe" stroke-linejoin="round">
<path d="M426.6 295.5 L440.4 295.2 L440.4 386.8 L397 387.4 L396 373.3 L421 372.7 Q426.6 372.4 426.6 366.5 Z" fill="#6565c8" stroke="#000" stroke-width="1.1"/>
<path d="M453.5 372.6 L484.5 371.3 L484.5 384.6 L453.5 385.2 Z" fill="#6565c8" stroke="#000" stroke-width="1.1"/>
<path d="M396 373.3 L421 372.7 Q426.6 372.4 426.6 366.5 L428.6 367.5 Q428.6 374.6 421.5 375.0 L396.2 375.6 Z" fill="#4646a2" stroke="#000" stroke-width="0.7"/>
<path d="M453.5 372.6 L484.5 371.3 L484.5 373.6 L453.5 374.9 Z" fill="#4646a2" stroke="#000" stroke-width="0.7"/>
</g>
<g id="backwheels">
<ellipse cx="377.30" cy="384.20" rx="18.00" ry="18.50" fill="#4a2404" stroke="#000" stroke-width="1.2"/>
<ellipse cx="378.90" cy="383.80" rx="17.00" ry="17.70" fill="#c66a14" stroke="#1e0c00" stroke-width="1.0"/>
<ellipse cx="370.65" cy="377.66" rx="2.9" ry="2.5" fill="#dcdad6" stroke="#1e0c00" stroke-width="1.2" transform="rotate(-25 370.65 377.66)"/>
<path d="M368.65 377.06 a2.2 1.9 0 0 1 3.6 -1.2" fill="none" stroke="#6a6a6a" stroke-width="0.8"/>
<ellipse cx="382.12" cy="374.16" rx="2.9" ry="2.5" fill="#dcdad6" stroke="#1e0c00" stroke-width="1.2" transform="rotate(-25 382.12 374.16)"/>
<path d="M380.12 373.56 a2.2 1.9 0 0 1 3.6 -1.2" fill="none" stroke="#6a6a6a" stroke-width="0.8"/>
<ellipse cx="389.00" cy="383.98" rx="2.9" ry="2.5" fill="#dcdad6" stroke="#1e0c00" stroke-width="1.2" transform="rotate(-25 389.00 383.98)"/>
<path d="M387.00 383.38 a2.2 1.9 0 0 1 3.6 -1.2" fill="none" stroke="#6a6a6a" stroke-width="0.8"/>
<ellipse cx="370.44" cy="389.65" rx="2.9" ry="2.5" fill="#dcdad6" stroke="#1e0c00" stroke-width="1.2" transform="rotate(-25 370.44 389.65)"/>
<path d="M368.44 389.05 a2.2 1.9 0 0 1 3.6 -1.2" fill="none" stroke="#6a6a6a" stroke-width="0.8"/>
<circle cx="377.40" cy="379.40" r="2.7" fill="#b85c0c" stroke="#1e0c00" stroke-width="1.0"/>
<ellipse cx="500.20" cy="381.00" rx="18.00" ry="18.50" fill="#4a2404" stroke="#000" stroke-width="1.2"/>
<ellipse cx="501.80" cy="380.60" rx="17.00" ry="17.70" fill="#c66a14" stroke="#1e0c00" stroke-width="1.0"/>
<ellipse cx="493.55" cy="374.46" rx="2.9" ry="2.5" fill="#dcdad6" stroke="#1e0c00" stroke-width="1.2" transform="rotate(-25 493.55 374.46)"/>
<path d="M491.55 373.86 a2.2 1.9 0 0 1 3.6 -1.2" fill="none" stroke="#6a6a6a" stroke-width="0.8"/>
<ellipse cx="505.02" cy="370.96" rx="2.9" ry="2.5" fill="#dcdad6" stroke="#1e0c00" stroke-width="1.2" transform="rotate(-25 505.02 370.96)"/>
<path d="M503.02 370.36 a2.2 1.9 0 0 1 3.6 -1.2" fill="none" stroke="#6a6a6a" stroke-width="0.8"/>
<ellipse cx="511.90" cy="380.78" rx="2.9" ry="2.5" fill="#dcdad6" stroke="#1e0c00" stroke-width="1.2" transform="rotate(-25 511.90 380.78)"/>
<path d="M509.90 380.18 a2.2 1.9 0 0 1 3.6 -1.2" fill="none" stroke="#6a6a6a" stroke-width="0.8"/>
<circle cx="500.30" cy="376.20" r="2.7" fill="#b85c0c" stroke="#1e0c00" stroke-width="1.0"/>
</g>
<g id="links" stroke-linejoin="round">
<polygon points="573.40,262.50 582.30,254.50 594.20,305.50 583.20,297.50" fill="url(#gMagLink)" stroke="#000" stroke-width="1.15" />
<polygon points="529.70,254.70 535.00,253.70 538.70,264.70 532.40,265.40" fill="#d468c0" stroke="#000" stroke-width="0.9" />
<polygon points="520.00,218.90 526.20,217.60 531.20,232.40 523.80,233.70" fill="#6a6ad0" stroke="#000" stroke-width="0.9" />
<polygon points="396.40,296.50 405.50,296.20 409.50,306.00 402.00,309.00" fill="#c65fb0" stroke="#000" stroke-width="0.9" />
<polygon points="485.00,294.50 499.50,294.20 499.50,304.00 485.00,304.30" fill="#d070c0" stroke="#000" stroke-width="0.9" />
<polygon points="482.00,296.00 487.00,296.00 492.00,305.00 486.00,305.00" fill="#c65fb0" stroke="#000" stroke-width="0.9" />
</g>
<g id="magbar" stroke-linejoin="round">
<polygon points="407.70,305.80 564.40,301.40 587.00,302.60 586.00,315.40 515.00,315.30 409.00,318.30" fill="#c65fb0" stroke="#000" stroke-width="1.15" />
<polygon points="407.70,305.80 564.40,301.40 575.00,302.00 520.00,304.60 409.00,307.40" fill="#a84a98" stroke="#000" stroke-width="0.7" />
</g>
<g id="pinkboard" stroke-linejoin="round">
<path d="M641.0 88.5 Q639.4 80.5 646.2 78.9 Q653.0 77.6 654.6 84.6 L667.3 139.5 L654.9 142.0 Z" fill="url(#gRoller)" stroke="#000" stroke-width="1.2"/>
<path d="M641.6 84.5 Q647 80 654.2 83.2" fill="none" stroke="#3c2432" stroke-width="0.8"/>
<path d="M644.2 101.5 L645.6 101.0 L654.6 141.2 L652.4 141.0 Z" fill="#fdfdfe" stroke="#000" stroke-width="0.6"/>
<path d="M654.6 138.4 Q660 133.6 666.0 136.2" fill="none" stroke="#2a1822" stroke-width="1.0"/>
<path d="M648.70 143.20 L655.50 139.00 A6.6 6.6 0 0 1 667.60 144.40 L562.20 280.20 Q561.0 281.5 562.6 283.0 L594.0 304.6 A5.6 5.6 0 0 1 586.6 316.4 L554.6 292.6 Q548 287 546.50 275.20 Z" fill="#d096bd" stroke="#000" stroke-width="1.15"/>
<path d="M653.60 146.60 L552.20 279.40" stroke="#000" stroke-width="1.1" fill="none"/>
<path d="M560.8 285.2 L591.5 306.8" stroke="#000" stroke-width="0.9" fill="none"/>
<polygon points="643.30,139.20 648.70,143.20 546.50,275.20 540.80,270.00" fill="url(#gPinkStrip)" stroke="#000" stroke-width="1.15" />
<polygon points="629.40,76.30 643.30,139.20 540.80,270.00 525.00,209.50" fill="#ad7f99" stroke="#000" stroke-width="1.15" />
<polygon points="629.40,76.30 638.90,82.50 653.60,146.60 643.30,139.20" fill="#553a48" stroke="#000" stroke-width="1.15" />
<circle cx="661.4" cy="141.3" r="2.5" fill="#c88fb5" stroke="#000" stroke-width="0.9"/>
<circle cx="535.4" cy="222.3" r="2.5" fill="#b487a0" stroke="#000" stroke-width="0.8"/>
<circle cx="575.1" cy="252.6" r="2.5" fill="#d9a0c6" stroke="#000" stroke-width="0.8"/>
</g>
<g id="greenboard" stroke-linejoin="round">
<ellipse cx="352.8" cy="227.6" rx="6.2" ry="3.6" fill="#6464c8" stroke="#000" stroke-width="1.0" transform="rotate(-12 352.8 227.6)"/>
<ellipse cx="353.0" cy="228.6" rx="4.6" ry="2.4" fill="#4c4ca6" stroke="#000" stroke-width="0.7" transform="rotate(-12 353 228.6)"/>
<path d="M345.3 236.0 Q346.3 229.8 353.2 229.2 Q360.6 229.0 362.7 235.2 L376.5 284.5 L362 291 Z" fill="#35c47b" stroke="#000" stroke-width="1.1"/>
<path d="M349.6 248.5 L353 245.5 L364 248.5 L373.5 283 L362.5 289.5 Z" fill="#e1e3ed" stroke="#000" stroke-width="0.6"/>
<path d="M352.2 236.5 Q354 232.3 357 235.4 L369.3 283.5 L364.6 285.3 Z" fill="url(#gWhiteRod)" stroke="#000" stroke-width="0.9"/>
<path d="M355.01 290.50 L379.83 285.00 L372.50 296.50 L290.60 396.50 A6.3 6.3 0 0 1 279.20 390.20 L278.60 383.20 Z" fill="#35c47b" stroke="#000" stroke-width="1.15"/>
<path d="M362.6 294.8 A5.8 5.8 0 0 1 371.0 287.2 L410.2 312.6 A5.6 5.6 0 0 1 402.6 321.8 L372.5 302.5 Z" fill="#35c47b" stroke="#000" stroke-width="1.15"/>
<path d="M358.75 293.75 L285.10 388.10" stroke="#000" stroke-width="1.1" fill="none"/>
<polygon points="349.50,287.00 355.01,290.50 281.20,384.40 275.40,379.40" fill="url(#gGreenStrip)" stroke="#000" stroke-width="1.15" />
<polygon points="334.40,223.50 349.50,287.00 275.40,379.40 259.50,318.75" fill="#2fa966" stroke="#000" stroke-width="1.15" />
<polygon points="334.40,223.50 343.60,229.30 358.75,293.75 349.50,287.00" fill="#185e39" stroke="#000" stroke-width="1.15" />
<circle cx="285.1" cy="393.2" r="2.3" fill="#35c47b" stroke="#000" stroke-width="0.9"/>
<path d="M359.0 287.5 Q360.5 281.6 369.6 280.6" fill="none" stroke="#000" stroke-width="3.2"/>
<path d="M359.0 287.5 Q360.5 281.6 369.6 280.6" fill="none" stroke="#2fbf76" stroke-width="1.7"/>
</g>
<g id="actuator">
<rect x="488.6" y="350" width="6.6" height="42" fill="url(#gRod)" stroke="#000" stroke-width="0.9"/>
<rect x="483.8" y="315.5" width="15.8" height="37" fill="url(#gAct)" stroke="#000" stroke-width="1.1"/>
</g>
<g id="gear">
<polygon points="460.80,415.40 459.15,416.80 460.56,418.43 458.71,419.56 459.85,421.39 457.85,422.21 458.69,424.21 456.58,424.70 457.09,426.80 454.94,426.96 455.12,429.12 452.96,428.94 452.80,431.09 450.70,430.58 450.21,432.69 448.21,431.85 447.39,433.85 445.56,432.71 444.43,434.56 442.80,433.15 441.40,434.80 440.00,433.15 438.37,434.56 437.24,432.71 435.41,433.85 434.59,431.85 432.59,432.69 432.10,430.58 430.00,431.09 429.84,428.94 427.68,429.12 427.86,426.96 425.71,426.80 426.22,424.70 424.11,424.21 424.95,422.21 422.95,421.39 424.09,419.56 422.24,418.43 423.65,416.80 422.00,415.40 423.65,414.00 422.24,412.37 424.09,411.24 422.95,409.41 424.95,408.59 424.11,406.59 426.22,406.10 425.71,404.00 427.86,403.84 427.68,401.68 429.84,401.86 430.00,399.71 432.10,400.22 432.59,398.11 434.59,398.95 435.41,396.95 437.24,398.09 438.37,396.24 440.00,397.65 441.40,396.00 442.80,397.65 444.43,396.24 445.56,398.09 447.39,396.95 448.21,398.95 450.21,398.11 450.70,400.22 452.80,399.71 452.96,401.86 455.12,401.68 454.94,403.84 457.09,404.00 456.58,406.10 458.69,406.59 457.85,408.59 459.85,409.41 458.71,411.24 460.56,412.37 459.15,414.00" fill="#c9c568" stroke="#111100" stroke-width="1.3" />
<path d="M438 412 Q434 418 437.5 428" fill="none" stroke="#8c8c50" stroke-width="1"/>
<path d="M441.5 409.5 Q435.5 412 436.8 421 Q437.5 427 441.5 430 Z" fill="#dedc9a" stroke="#77752f" stroke-width="0.6"/>
</g>
<g id="cyan" stroke-linejoin="round">
<path d="M373.9 385.2 Q374.6 381.0 379.0 381.4 Q383.0 382.0 383.6 385.6 L387.4 398 L378.0 399 Z" fill="#1cc01c" stroke="#052" stroke-width="0.9"/>
<path d="M496.2 385.5 Q497.0 378.4 501.5 378.2 Q505.6 378.6 506.6 384.5 L508.2 391.5 L496.6 392.2 Z" fill="#1cc01c" stroke="#052" stroke-width="0.9"/>
<polygon points="412.00,388.40 463.50,387.00 463.50,388.50 412.00,389.90" fill="#f4f000" stroke="#555500" stroke-width="0.5" />
<rect x="408.6" y="384.4" width="1.8" height="5.6" fill="#aaa" stroke="#222" stroke-width="0.6"/>
<rect x="462.2" y="382.8" width="1.8" height="5.6" fill="#aaa" stroke="#222" stroke-width="0.6"/>
<rect x="448.0" y="383.4" width="1.6" height="5.0" fill="#aaa" stroke="#222" stroke-width="0.6"/>
<path d="M423 388.6 L424 386 L425 388.5 L426 385.8 L427 388.4 L428 385.6 L429 388.3 L430 385.5 L431 388.2 L432 385.4 L433 388.1 L434 385.4 L435 388 L436 385.6 L437 388 L438 385.8 L439 388 L440 386 L441 388" fill="none" stroke="#111" stroke-width="1.3"/>
<path d="M429.2 386.5 L429.2 379.5 Q429.4 374.8 432.8 374.6 Q436.4 374.8 436.8 379.5 L436.8 386.5 Z" fill="#9a9a9a" stroke="#222" stroke-width="0.9"/>
<ellipse cx="432.9" cy="376.3" rx="2.6" ry="1.6" fill="#c4c4c4" stroke="#333" stroke-width="0.6"/>
<polygon points="515.00,389.20 529.20,388.30 529.30,400.20 515.00,401.60" fill="url(#gRedBar)" stroke="#000" stroke-width="1.0" />
<path d="M516 401.5 l1 1.7 l1 -1.8 l1 1.7 l1 -1.8 l1 1.7 l1 -1.8 l1 1.7 l1 -1.8 l1 1.7 l1 -1.8 l1 1.7 l1 -1.8 l1 1.6" fill="none" stroke="#7a0000" stroke-width="0.9"/>
<path d="M378.8 391.6 L515.4 388.9 L515.6 416.4 L502.2 416.9 L502.0 399.2 L392.7 402.6 L392.9 420.2 L379.2 420.6 Z" fill="#12c6d0" stroke="#000" stroke-width="1.1"/>
<polygon points="378.80,391.60 431.00,390.60 431.00,395.40 379.00,396.60" fill="#0a9aa4" stroke="#000" stroke-width="0.7" />
<path d="M379 394 L431 393" stroke="#000" stroke-width="0.6"/>
<polygon points="431.00,390.70 515.20,388.60 515.30,393.90 431.00,395.90" fill="#f00000" stroke="#000" stroke-width="0.8" />
<path d="M431 393.4 L515.2 391.2" stroke="#7a0000" stroke-width="0.7"/>
<polygon points="454.40,400.80 502.00,399.30 502.00,401.80 454.40,403.40" fill="#e00000" stroke="#000" stroke-width="0.5" />
<path d="M455 403.4 L502 401.9" stroke="#300" stroke-width="0.9" stroke-dasharray="0.9 0.9"/>
<polygon points="458.00,404.30 500.00,403.00 500.00,404.20 458.00,405.50" fill="#444" stroke="none" stroke-width="0" />
<path d="M380.3 420.4 Q385.5 410.5 391.3 420 L392.4 424.5 L379.8 425.5 Z" fill="#1ec81e" stroke="#064" stroke-width="0.7"/>
<path d="M503.6 416.6 Q508.8 406.5 514.5 416.3 L515.2 420.5 L503.2 421.5 Z" fill="#1ec81e" stroke="#064" stroke-width="0.7"/>
</g>
<g id="frontwheels">
<ellipse cx="390.50" cy="438.20" rx="17.50" ry="18.00" fill="#4a2404" stroke="#000" stroke-width="1.2"/>
<ellipse cx="392.10" cy="437.80" rx="16.50" ry="17.20" fill="#c66a14" stroke="#1e0c00" stroke-width="1.0"/>
<ellipse cx="383.85" cy="431.66" rx="2.9" ry="2.5" fill="#dcdad6" stroke="#1e0c00" stroke-width="1.2" transform="rotate(-25 383.85 431.66)"/>
<path d="M381.85 431.06 a2.2 1.9 0 0 1 3.6 -1.2" fill="none" stroke="#6a6a6a" stroke-width="0.8"/>
<ellipse cx="395.32" cy="428.16" rx="2.9" ry="2.5" fill="#dcdad6" stroke="#1e0c00" stroke-width="1.2" transform="rotate(-25 395.32 428.16)"/>
<path d="M393.32 427.56 a2.2 1.9 0 0 1 3.6 -1.2" fill="none" stroke="#6a6a6a" stroke-width="0.8"/>
<ellipse cx="402.20" cy="437.98" rx="2.9" ry="2.5" fill="#dcdad6" stroke="#1e0c00" stroke-width="1.2" transform="rotate(-25 402.20 437.98)"/>
<path d="M400.20 437.38 a2.2 1.9 0 0 1 3.6 -1.2" fill="none" stroke="#6a6a6a" stroke-width="0.8"/>
<ellipse cx="394.98" cy="447.55" rx="2.9" ry="2.5" fill="#dcdad6" stroke="#1e0c00" stroke-width="1.2" transform="rotate(-25 394.98 447.55)"/>
<path d="M392.98 446.95 a2.2 1.9 0 0 1 3.6 -1.2" fill="none" stroke="#6a6a6a" stroke-width="0.8"/>
<ellipse cx="383.64" cy="443.65" rx="2.9" ry="2.5" fill="#dcdad6" stroke="#1e0c00" stroke-width="1.2" transform="rotate(-25 383.64 443.65)"/>
<path d="M381.64 443.05 a2.2 1.9 0 0 1 3.6 -1.2" fill="none" stroke="#6a6a6a" stroke-width="0.8"/>
<circle cx="390.60" cy="433.40" r="2.7" fill="#b85c0c" stroke="#1e0c00" stroke-width="1.0"/>
<ellipse cx="514.00" cy="435.00" rx="17.60" ry="18.10" fill="#4a2404" stroke="#000" stroke-width="1.2"/>
<ellipse cx="515.60" cy="434.60" rx="16.60" ry="17.30" fill="#c66a14" stroke="#1e0c00" stroke-width="1.0"/>
<ellipse cx="507.35" cy="428.46" rx="2.9" ry="2.5" fill="#dcdad6" stroke="#1e0c00" stroke-width="1.2" transform="rotate(-25 507.35 428.46)"/>
<path d="M505.35 427.86 a2.2 1.9 0 0 1 3.6 -1.2" fill="none" stroke="#6a6a6a" stroke-width="0.8"/>
<ellipse cx="518.82" cy="424.96" rx="2.9" ry="2.5" fill="#dcdad6" stroke="#1e0c00" stroke-width="1.2" transform="rotate(-25 518.82 424.96)"/>
<path d="M516.82 424.36 a2.2 1.9 0 0 1 3.6 -1.2" fill="none" stroke="#6a6a6a" stroke-width="0.8"/>
<ellipse cx="525.70" cy="434.78" rx="2.9" ry="2.5" fill="#dcdad6" stroke="#1e0c00" stroke-width="1.2" transform="rotate(-25 525.70 434.78)"/>
<path d="M523.70 434.18 a2.2 1.9 0 0 1 3.6 -1.2" fill="none" stroke="#6a6a6a" stroke-width="0.8"/>
<ellipse cx="518.48" cy="444.35" rx="2.9" ry="2.5" fill="#dcdad6" stroke="#1e0c00" stroke-width="1.2" transform="rotate(-25 518.48 444.35)"/>
<path d="M516.48 443.75 a2.2 1.9 0 0 1 3.6 -1.2" fill="none" stroke="#6a6a6a" stroke-width="0.8"/>
<ellipse cx="507.14" cy="440.45" rx="2.9" ry="2.5" fill="#dcdad6" stroke="#1e0c00" stroke-width="1.2" transform="rotate(-25 507.14 440.45)"/>
<path d="M505.14 439.85 a2.2 1.9 0 0 1 3.6 -1.2" fill="none" stroke="#6a6a6a" stroke-width="0.8"/>
<circle cx="514.10" cy="430.20" r="2.7" fill="#b85c0c" stroke="#1e0c00" stroke-width="1.0"/>
</g>
<g id="seat" stroke-linejoin="round">
<polygon points="358.00,212.30 518.60,207.50 532.40,269.60 374.00,273.90" fill="#4f4f9f" stroke="#000" stroke-width="1.15" />
<polygon points="356.90,212.90 360.20,215.50 375.90,279.00 374.00,286.00" fill="#5c5cb6" stroke="#000" stroke-width="0.9" />
<polygon points="374.00,273.90 532.40,269.60 533.70,277.00 375.50,281.40" fill="url(#gSeatEdge)" stroke="#000" stroke-width="1.15" />
<polygon points="375.50,281.40 533.70,277.00 534.30,282.70 376.30,287.00" fill="#6a6acc" stroke="#000" stroke-width="1.15" />
<circle cx="391.5" cy="258" r="2.6" fill="#4f4f9f" stroke="#000" stroke-width="0.8"/>
</g>
<g id="frontframe" stroke-linejoin="round">
<path d="M363.0 289.5 Q362.8 286.3 367 286.1 L376.3 287.0 L534.3 282.7 L551 281.7 A5.6 5.6 0 0 1 551.6 292.9 L456.5 295.3 Q453.8 295.5 453.8 298 L453.8 426.5 Q454 432.0 459.5 432.0 L515.5 431.0 A7 7 0 0 1 516.5 445.4 L393.5 449.2 A7 7 0 0 1 391.5 435.4 L435.5 434.0 Q441.6 433.6 441.6 427.5 L441.6 298.5 Q441.6 295.9 439 295.9 L368.0 297.8 Q363.2 297.4 363.0 289.5 Z" fill="#6565c8" stroke="#000" stroke-width="1.15"/>
<path d="M389.6 436.3 L435.5 434.0 Q441.6 433.6 441.6 427.5 L443.6 428.5 Q443.6 436.0 436.5 436.4 L391.0 438.6 Z" fill="#4646a2" stroke="#000" stroke-width="0.7"/>
<path d="M453.8 426.5 Q454 432.0 459.5 432.0 L515.5 431.0 L517.5 433.2 L459.0 434.4 Q452.4 434.3 452.0 427.5 Z" fill="#4646a2" stroke="#000" stroke-width="0.7"/>
<circle cx="367.60" cy="292.00" r="3.70" fill="#1a1a1a" stroke="#000" stroke-width="0.8"/><circle cx="367.60" cy="292.00" r="1.80" fill="#d8d8d8" stroke="#555" stroke-width="0.5"/>
<circle cx="551.30" cy="287.30" r="3.70" fill="#1a1a1a" stroke="#000" stroke-width="0.8"/><circle cx="551.30" cy="287.30" r="1.80" fill="#d8d8d8" stroke="#555" stroke-width="0.5"/>
<circle cx="406.20" cy="317.10" r="3.70" fill="#1a1a1a" stroke="#000" stroke-width="0.8"/><circle cx="406.20" cy="317.10" r="1.80" fill="#d8d8d8" stroke="#555" stroke-width="0.5"/>
<circle cx="590.20" cy="312.00" r="3.70" fill="#1a1a1a" stroke="#000" stroke-width="0.8"/><circle cx="590.20" cy="312.00" r="1.80" fill="#d8d8d8" stroke="#555" stroke-width="0.5"/>
<circle cx="448.0" cy="441.6" r="3.4" fill="#333" stroke="#000" stroke-width="0.8"/><circle cx="448" cy="441.4" r="1.7" fill="#aaa"/>
<circle cx="393.2" cy="442.6" r="3.6" fill="#20249a" stroke="#000" stroke-width="0.9"/><rect x="391.6" y="441.2" width="3.2" height="3.2" fill="#18d018" stroke="#040" stroke-width="0.5"/>
<circle cx="515.4" cy="440.2" r="3.6" fill="#20249a" stroke="#000" stroke-width="0.9"/><rect x="513.8" y="438.8" width="3.2" height="3.2" fill="#18d018" stroke="#040" stroke-width="0.5"/>
</g>
</svg></div>
<div id="sep"></div>
<div id="bar"></div>
<svg id="ruler" width="972" height="30" viewBox="0 0 972 30" shape-rendering="crispEdges">
<defs><pattern id="hatch" width="8" height="8" patternUnits="userSpaceOnUse" x="0" y="0">
<rect width="8" height="8" fill="#ffff7d"/>
<rect x="0" y="7" width="1" height="1" fill="#c8c680"/><rect x="1" y="6" width="1" height="1" fill="#c8c680"/><rect x="2" y="5" width="1" height="1" fill="#c8c680"/><rect x="3" y="4" width="1" height="1" fill="#c8c680"/><rect x="4" y="3" width="1" height="1" fill="#c8c680"/><rect x="5" y="2" width="1" height="1" fill="#c8c680"/><rect x="6" y="1" width="1" height="1" fill="#c8c680"/><rect x="7" y="0" width="1" height="1" fill="#c8c680"/>
</pattern></defs>
<rect x="0" y="0" width="972" height="30" fill="#cacaca"/>
<rect x="0" y="0" width="548" height="30" fill="url(#hatch)"/>
<rect x="15" y="24" width="1" height="5" fill="#666"/>
<rect x="32" y="24" width="1" height="5" fill="#666"/>
<rect x="49" y="24" width="1" height="5" fill="#666"/>
<rect x="66" y="24" width="1" height="5" fill="#666"/>
<rect x="84" y="21" width="1" height="8" fill="#666"/>
<rect x="101" y="24" width="1" height="5" fill="#666"/>
<rect x="118" y="24" width="1" height="5" fill="#666"/>
<rect x="135" y="24" width="1" height="5" fill="#666"/>
<rect x="152" y="24" width="1" height="5" fill="#666"/>
<rect x="187" y="24" width="1" height="5" fill="#666"/>
<rect x="204" y="24" width="1" height="5" fill="#666"/>
<rect x="221" y="24" width="1" height="5" fill="#666"/>
<rect x="238" y="24" width="1" height="5" fill="#666"/>
<rect x="256" y="21" width="1" height="8" fill="#666"/>
<rect x="273" y="24" width="1" height="5" fill="#666"/>
<rect x="290" y="24" width="1" height="5" fill="#666"/>
<rect x="307" y="24" width="1" height="5" fill="#666"/>
<rect x="324" y="24" width="1" height="5" fill="#666"/>
<rect x="359" y="24" width="1" height="5" fill="#666"/>
<rect x="376" y="24" width="1" height="5" fill="#666"/>
<rect x="393" y="24" width="1" height="5" fill="#666"/>
<rect x="410" y="24" width="1" height="5" fill="#666"/>
<rect x="428" y="21" width="1" height="8" fill="#666"/>
<rect x="445" y="24" width="1" height="5" fill="#666"/>
<rect x="462" y="24" width="1" height="5" fill="#666"/>
<rect x="479" y="24" width="1" height="5" fill="#666"/>
<rect x="496" y="24" width="1" height="5" fill="#666"/>
<rect x="531" y="24" width="1" height="5" fill="#666"/>
<rect x="548" y="24" width="1" height="5" fill="#666"/>
<rect x="565" y="24" width="1" height="5" fill="#666"/>
<rect x="582" y="24" width="1" height="5" fill="#666"/>
<rect x="600" y="21" width="1" height="8" fill="#666"/>
<rect x="617" y="24" width="1" height="5" fill="#666"/>
<rect x="634" y="24" width="1" height="5" fill="#666"/>
<rect x="651" y="24" width="1" height="5" fill="#666"/>
<rect x="668" y="24" width="1" height="5" fill="#666"/>
<rect x="703" y="24" width="1" height="5" fill="#666"/>
<rect x="720" y="24" width="1" height="5" fill="#666"/>
<rect x="737" y="24" width="1" height="5" fill="#666"/>
<rect x="754" y="24" width="1" height="5" fill="#666"/>
<rect x="772" y="21" width="1" height="8" fill="#666"/>
<rect x="789" y="24" width="1" height="5" fill="#666"/>
<rect x="806" y="24" width="1" height="5" fill="#666"/>
<rect x="823" y="24" width="1" height="5" fill="#666"/>
<rect x="840" y="24" width="1" height="5" fill="#666"/>
<rect x="875" y="24" width="1" height="5" fill="#666"/>
<rect x="892" y="24" width="1" height="5" fill="#666"/>
<rect x="909" y="24" width="1" height="5" fill="#666"/>
<rect x="926" y="24" width="1" height="5" fill="#666"/>
<rect x="944" y="21" width="1" height="8" fill="#666"/>
<rect x="961" y="24" width="1" height="5" fill="#666"/>
<rect x="170" y="3" width="1" height="27" fill="#606060"/>
<rect x="342" y="3" width="1" height="27" fill="#606060"/>
<rect x="514" y="3" width="1" height="27" fill="#606060"/>
<rect x="686" y="3" width="1" height="27" fill="#606060"/>
<rect x="858" y="3" width="1" height="27" fill="#606060"/>
<g shape-rendering="auto" font-family="'Liberation Sans','Noto Sans CJK SC',sans-serif" font-weight="bold" font-size="14.3px" fill="#666"><text x="0.6" y="17.7">1 秒</text>
<text x="172.6" y="17.7">2 秒</text>
<text x="344.6" y="17.7">3 秒</text>
<text x="516.6" y="17.7">4 秒</text>
<text x="688.6" y="17.7">5 秒</text>
<text x="860.6" y="17.7">6 秒</text></g>
</svg>
<svg id="tracksvg" style="position:absolute;left:0;top:622px" width="972" height="139" viewBox="0 622 972 139">
<g shape-rendering="crispEdges">
<rect x="170" y="623" width="1" height="138" fill="#bababa"/>
<rect x="342" y="623" width="1" height="138" fill="#bababa"/>
<rect x="514" y="623" width="1" height="138" fill="#bababa"/>
<rect x="686" y="623" width="1" height="138" fill="#bababa"/>
<rect x="858" y="623" width="1" height="138" fill="#bababa"/>
<rect x="0" y="634" width="548" height="1" fill="#000"/>
<rect x="0" y="673" width="548" height="6" fill="#ffff00"/>
<rect x="0" y="673" width="213" height="1" fill="#3cc83c"/>
<rect x="0" y="678" width="213" height="1" fill="#3cc83c"/>
<rect x="0" y="697" width="548" height="6" fill="#ffff00"/>
<rect x="0" y="697" width="203" height="1" fill="#3cc83c"/>
<rect x="0" y="702" width="203" height="1" fill="#3cc83c"/>
<rect x="0" y="721" width="548" height="6" fill="#ffff00"/>
<rect x="0" y="721" width="213" height="1" fill="#3cc83c"/>
<rect x="0" y="726" width="213" height="1" fill="#3cc83c"/>
<rect x="0" y="745" width="548" height="6" fill="#ffff00"/>
<rect x="0" y="745" width="213" height="1" fill="#3cc83c"/>
<rect x="0" y="750" width="213" height="1" fill="#3cc83c"/>
<rect x="57" y="592" width="2" height="169" fill="#7a7a7a"/>
</g>
<polygon points="213.0,672.4 218.7,682.6 213.0,692.8 207.3,682.6" fill="#8e8e8e" stroke="#111" stroke-width="1"/>
<polygon points="203.8,696.4 209.5,706.6 203.8,716.8 198.1,706.6" fill="#8e8e8e" stroke="#111" stroke-width="1"/>
<polygon points="213.0,720.4 218.7,730.6 213.0,740.8 207.3,730.6" fill="#8e8e8e" stroke="#111" stroke-width="1"/>
<polygon points="213.0,744.4 218.7,754.6 213.0,764.8 207.3,754.6" fill="#8e8e8e" stroke="#111" stroke-width="1"/>
<polygon points="548.3,623.8 554.3,634.5 548.3,645.2 542.3,634.5" fill="#000"/>
</svg>
<div style="position:absolute;left:57px;top:592px;width:2px;height:30px;background:#7a7a7a"></div>
<svg id="tb" width="972" height="28" viewBox="0 564 972 28">
<defs>
<linearGradient id="tbBlue" x1="0" y1="0" x2="0" y2="1"><stop offset="0" stop-color="#7fcdea"/><stop offset="0.55" stop-color="#3c9bcb"/><stop offset="1" stop-color="#1f6fa3"/></linearGradient>
<linearGradient id="tbBlueH" x1="0" y1="0" x2="1" y2="0"><stop offset="0" stop-color="#8fd0ee"/><stop offset="0.5" stop-color="#5aaedb"/><stop offset="0.5" stop-color="#3f93c8"/><stop offset="1" stop-color="#2f7fb6"/></linearGradient>
<linearGradient id="tbMotor" x1="0" y1="0" x2="0" y2="1"><stop offset="0" stop-color="#a8e0f6"/><stop offset="0.5" stop-color="#62b8e2"/><stop offset="1" stop-color="#2a86bd"/></linearGradient>
<linearGradient id="tbGray" x1="0" y1="0" x2="1" y2="1"><stop offset="0" stop-color="#ffffff"/><stop offset="1" stop-color="#c4c4c4"/></linearGradient>
<linearGradient id="tbGhost" x1="0" y1="0" x2="1" y2="0"><stop offset="0" stop-color="#e6e6e6"/><stop offset="1" stop-color="#d6d6d6"/></linearGradient>
</defs>
<!-- dropdown -->
<rect x="-5.5" y="565.5" width="49" height="21" fill="#ffffff" stroke="#707070" stroke-width="1"/>
<path d="M29 574.1 L33.5 578.7 L38 574.1" fill="none" stroke="#3a3a3a" stroke-width="1.15"/>
<!-- arrow -->
<path d="M53.2 576.2 L62.0 576.2 L62.0 571.8 L68.3 577.4 L62.0 583.1 L62.0 578.7 L53.2 578.7 Z" fill="#1c1c1c"/>
<path d="M79.7 575.9 L85.1 575.9 L82.4 579.1 Z" fill="#2c2c2c"/>
<!-- film + save -->
<rect x="94" y="569.1" width="12" height="17.7" fill="#1a1a1a"/>
<g fill="#f2f2f2">
<rect x="95" y="570.6" width="1.4" height="2.0"/><rect x="95" y="574.5" width="1.4" height="2.0"/><rect x="95" y="578.4" width="1.4" height="2.0"/><rect x="95" y="582.3" width="1.4" height="2.0"/>
<rect x="103.6" y="570.6" width="1.4" height="2.0"/><rect x="103.6" y="574.5" width="1.4" height="2.0"/>
<rect x="97.9" y="570.2" width="4.2" height="2.8"/><rect x="97.9" y="574.9" width="2.4" height="8.6"/><rect x="97.9" y="584.6" width="2.4" height="1.6"/>
</g>
<path d="M101.4 574.9 L111.7 574.9 L112.9 576.1 L112.9 587.7 L100.3 587.7 L100.3 576 Z" fill="url(#tbBlue)" stroke="#175a8a" stroke-width="0.9"/>
<rect x="102.7" y="575.9" width="7.8" height="5.3" fill="#f4f4f4" stroke="#6a8aa0" stroke-width="0.4"/>
<rect x="103.7" y="577.2" width="5.8" height="0.9" fill="#8a8a8a"/><rect x="103.7" y="579.1" width="5.8" height="0.9" fill="#8a8a8a"/>
<rect x="103.9" y="583.6" width="5.9" height="4.0" fill="#8c8c8c"/><rect x="105.1" y="584.4" width="1.9" height="2.6" fill="#333"/>
<!-- separators -->
<g stroke="#828282" stroke-width="1.2">
<path d="M119.4 567.1 V588.7"/><path d="M154.4 567.1 V588.7"/><path d="M216.5 567.1 V588.7"/><path d="M332.5 567.1 V588.7"/><path d="M367.5 567.1 V588.7"/>
</g>
<!-- camera wizard -->
<rect x="129.2" y="573.1" width="2.6" height="5.5" fill="#222"/>
<path d="M142.4 579.2 Q147.3 578.4 147.0 582.5 Q147 586.2 142.6 585.3 Z" fill="#fafafa" stroke="#2a2a2a" stroke-width="0.9"/>
<rect x="130.2" y="576.2" width="12.1" height="10.4" rx="1.6" fill="url(#tbBlue)" stroke="#17496c" stroke-width="0.9"/>
<circle cx="138" cy="581.2" r="2.1" fill="#fff" stroke="#1d4f74" stroke-width="1"/>
<path d="M139.6 572.0 L146.8 578.3" stroke="#111" stroke-width="2.2" stroke-linecap="butt"/>
<path d="M138.4 569.4 L140.3 571.3 L138.4 573.2 L136.5 571.3 Z" fill="#f6b21a"/>
<path d="M133.4 569.9 L134.9 571.4 L133.4 572.9 L131.9 571.4 Z" fill="#ee8a10"/>
<path d="M143.5 568.7 L145 570.2 L143.5 571.7 L142 570.2 Z" fill="#ee8a10"/>
<rect x="134.9" y="569.1" width="0.9" height="0.9" fill="#ee8a10"/><rect x="146.2" y="571.9" width="0.9" height="0.9" fill="#ee8a10"/>
<!-- selected autokey button -->
<rect x="160.6" y="565.7" width="25.8" height="24.6" rx="1.6" fill="#b3b1af" stroke="#3a82bb" stroke-width="1.3"/>
<path d="M164.3 578.4 L169.4 569.9 L174.6 578.4 L169.4 587.1 Z" fill="url(#tbBlueH)" stroke="#1f5b8a" stroke-width="0.8"/>
<path d="M182.3 569.2 L176.7 569.2 L170.9 574.5 L174.9 574.9 L170.1 579.6 L180.3 573.7 L176.9 573.6 Z" fill="#ffdf2a" stroke="#c85a00" stroke-width="0.9" stroke-linejoin="round"/>
<!-- ghost diamond + plus -->
<path d="M191.2 578.4 L196.6 569.8 L201.6 578.4 L196.6 587.1 Z" fill="url(#tbGhost)" stroke="#d2d2d2" stroke-width="0.6"/>
<path d="M200.5 581.3 H203.3 V578.3 H206 V581.3 H208.8 V584 H206 V586.9 H203.3 V584 H200.5 Z" fill="#d3d3d3"/>
<!-- motor -->
<circle cx="240" cy="575.2" r="4.4" fill="#e9e9e9" opacity="0.8"/>
<rect x="226.3" y="577.8" width="17.6" height="9" rx="4.5" fill="url(#tbMotor)" stroke="#0c4b7a" stroke-width="1.1"/>
<path d="M227.6 581.2 Q235 578.2 242.6 581.2" fill="none" stroke="#0c4b7a" stroke-width="0.8"/>
<path d="M230.3 572.7 Q238.2 573.2 238.0 582.5" fill="none" stroke="#1a1a1a" stroke-width="1.9"/>
<path d="M234.8 581.6 L241.2 581.6 L238 585.2 Z" fill="#1a1a1a"/>
<!-- spring -->
<g fill="#fbfbfb" stroke="#222" stroke-width="1.15">
<rect x="256.6" y="571.0" width="11" height="2.7" rx="1.35"/><rect x="256.6" y="575.2" width="11" height="2.7" rx="1.35"/><rect x="256.6" y="579.4" width="11" height="2.7" rx="1.35"/><rect x="256.6" y="583.5" width="11" height="2.7" rx="1.35"/>
</g>
<path d="M266.8 573.6 L267.6 575.3 M266.8 577.8 L267.6 579.5 M266.8 582 L267.6 583.6" stroke="#222" stroke-width="1"/>
<!-- cam -->
<rect x="285.5" y="569.4" width="5.1" height="5.8" rx="0.9" fill="url(#tbGray)" stroke="#222" stroke-width="1.1"/>
<path d="M286.6 575.4 L289.6 575.4 L288.1 577.2 Z" fill="#222"/>
<path d="M288.1 577.2 Q291.6 577.2 295.2 581.8 Q291.4 586.7 288.1 586.7 A4.75 4.75 0 0 1 288.1 577.2 Z" fill="#dcdcdc" stroke="#222" stroke-width="1.1"/>
<circle cx="288.1" cy="582" r="1.6" fill="#4a4a4a" stroke="#8a8a8a" stroke-width="0.7"/>
<!-- gravity (ghosted apple) -->
<path d="M313.0 569.6 L319.4 571.4 L319.8 574.6 L313.3 573.3 Z" fill="#ececec"/>
<path d="M312.6 573.6 L319.9 575.4 L320.2 577.4 L312.7 576.4 Z" fill="#e0e0e0"/>
<path d="M312.3 579.4 Q312.2 577.2 314.2 577.4 L319.0 578.2 Q320.8 578.6 320.6 581.4 Q320.4 586.3 316.4 586.3 Q312.5 586.3 312.3 579.4 Z" fill="url(#tbGray)" stroke="#666" stroke-width="0.7"/>
<path d="M312.5 584 Q311.6 577.0 314.4 577.3 L319.6 578.5" fill="none" stroke="#1e1e1e" stroke-width="1.4"/>
<path d="M313.4 578.6 L319.4 579.6" fill="none" stroke="#444" stroke-width="0.8"/>
<!-- gear -->
<g transform="translate(350.9 577.9)">
<path d="M-1.5 -7.7 L1.5 -7.7 L1.9 -5.7 L3.0 -5.2 L4.6 -6.4 L6.4 -4.6 L5.2 -3.0 L5.7 -1.9 L7.7 -1.5 L7.7 1.5 L5.7 1.9 L5.2 3.0 L6.4 4.6 L4.6 6.4 L3.0 5.2 L1.9 5.7 L1.5 7.7 L-1.5 7.7 L-1.9 5.7 L-3.0 5.2 L-4.6 6.4 L-6.4 4.6 L-5.2 3.0 L-5.7 1.9 L-7.7 1.5 L-7.7 -1.5 L-5.7 -1.9 L-5.2 -3.0 L-6.4 -4.6 L-4.6 -6.4 L-3.0 -5.2 L-1.9 -5.7 Z" fill="#efefef" stroke="#262626" stroke-width="1.05" stroke-linejoin="round"/>
<circle r="2.7" fill="#f6f6f6" stroke="#262626" stroke-width="1.1"/>
</g>
</svg>

</body></html>
